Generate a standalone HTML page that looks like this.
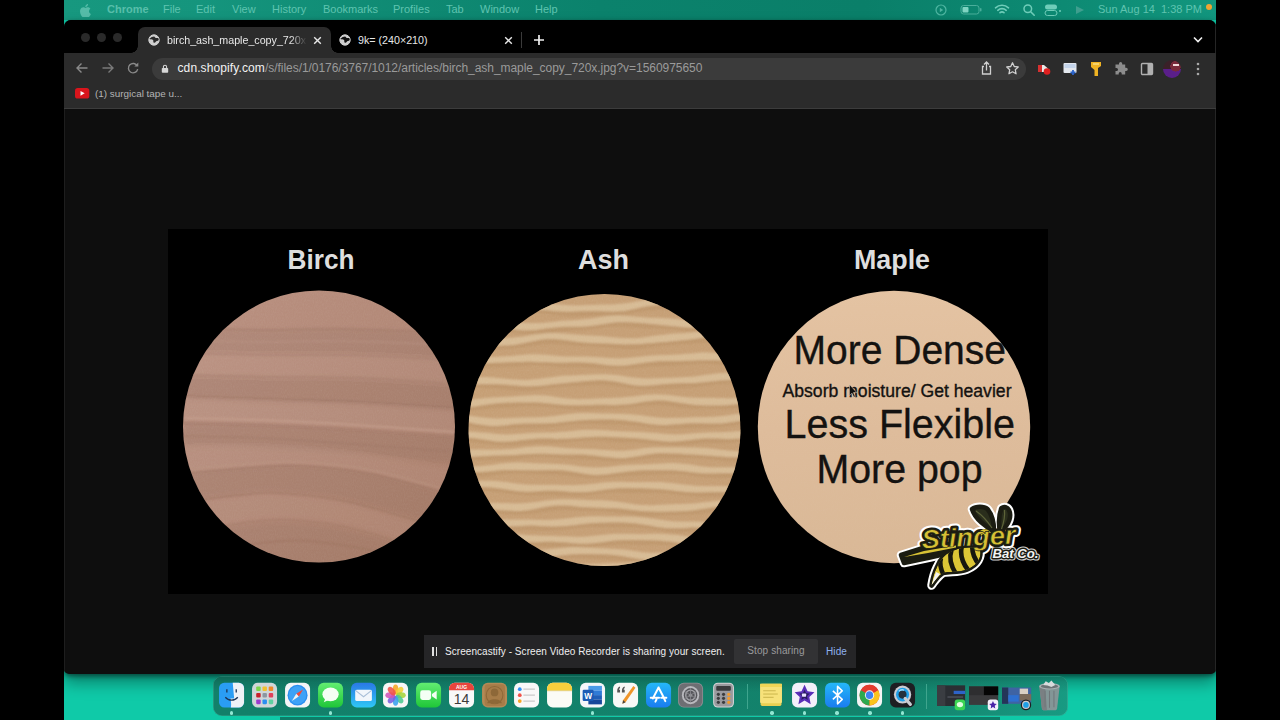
<!DOCTYPE html>
<html><head><meta charset="utf-8">
<style>
html,body{margin:0;padding:0;background:#000;}
body{width:1280px;height:720px;position:relative;overflow:hidden;font-family:"Liberation Sans",sans-serif;}
.abs{position:absolute;}
#desk{left:64px;top:0;width:1152px;height:720px;background:#0fcaa8;overflow:hidden;}
#menubar{left:0;top:0;width:1152px;height:20px;background:linear-gradient(90deg,#17987f 0,#15957d 136px,#0f8a73 340px,#0b826c 536px,#0a7f69 800px,#0d8a73 1000px,#12967e 1152px);}
#menubar span{position:absolute;top:3px;font-size:11px;color:#5fc4b0;white-space:nowrap;line-height:13px;}
#win{left:0;top:20px;width:1152px;height:654px;background:#0e0e0e;border-radius:7px 7px 5px 5px;overflow:hidden;box-shadow:0 2px 5px rgba(0,0,0,.5),0 9px 16px rgba(0,0,0,.36);}
#tabbar{left:0;top:0;width:1152px;height:33px;background:#000;}
#toolbar{left:0;top:33px;width:1152px;height:55px;background:#2b2b2b;border-bottom:1px solid #3c3c3c;}
.tl{width:9px;height:9px;border-radius:50%;background:#2a2a2a;top:13px;}
#tab1{left:74px;top:7px;width:193px;height:27px;background:#2b2b2b;border-radius:7px 7px 0 0;}
.tabtxt{font-size:10.7px;color:#e8e8e8;white-space:nowrap;line-height:13px;}
#url{left:87.500px;top:4.500px;width:874.500px;height:22px;border-radius:12px;background:#3b3b3b;}
#dock{left:148.500px;top:676px;width:855px;height:39.500px;background:linear-gradient(180deg,rgba(0,0,0,.22) 0,rgba(0,0,0,.1) 15%,rgba(0,0,0,0) 40%),linear-gradient(90deg,#12806a 0,#13836c 80%,#189a82 100%);border-radius:9px;box-shadow:inset 0 0 0 .6px rgba(120,220,200,.35);}
.ic{position:absolute;top:6px;width:27px;height:27px;border-radius:6px;}
.dot{position:absolute;top:35.200px;width:3.400px;height:3.400px;border-radius:50%;background:#93e6d3;}
</style></head><body>
<div id="desk" class="abs">
 <div id="menubar" class="abs">
  <svg class="abs" style="left:15px;top:3px" width="12" height="14" viewBox="0 0 12 14"><path d="M8.3 3.1c.5-.6.8-1.400.7-2.200-.7 0-1.500.5-2 1.100-.4.500-.8 1.300-.7 2.100.8.100 1.500-.400 2-1zM9 4.300c-1.100-.100-2 .600-2.500.600s-1.300-.600-2.200-.600c-1.100 0-2.200.700-2.700 1.700-1.200 2-.3 5 .8 6.700.6.800 1.200 1.700 2.100 1.700.8 0 1.200-.500 2.200-.500s1.300.500 2.200.500 1.500-.800 2-1.600c.700-.900.900-1.800.900-1.900 0 0-1.800-.700-1.800-2.700 0-1.700 1.400-2.500 1.400-2.500-.700-1.100-1.900-1.300-2.400-1.400z" fill="#55bca8"/></svg>
  <span style="left:43px;font-weight:bold;color:#58bfab">Chrome</span>
  <span style="left:99px">File</span>
  <span style="left:132px">Edit</span>
  <span style="left:168px">View</span>
  <span style="left:208px">History</span>
  <span style="left:259px">Bookmarks</span>
  <span style="left:329px">Profiles</span>
  <span style="left:382px">Tab</span>
  <span style="left:416px">Window</span>
  <span style="left:471px">Help</span>
  <svg class="abs" style="left:870px;top:3px" width="14" height="14" viewBox="0 0 14 14"><circle cx="7" cy="7" r="5" fill="none" stroke="#4fb6a2" stroke-width="1.200"/><path d="M5.800 4.800v4.400l3.400-2.200z" fill="#4fb6a2"/></svg>
  <svg class="abs" style="left:896px;top:4px" width="24" height="12" viewBox="0 0 24 12"><rect x="1" y="1.500" width="18" height="8.500" rx="2.500" fill="none" stroke="#4aae9b" stroke-width="1"/><rect x="2.500" y="3" width="6" height="5.500" rx="1" fill="#7fd4c2"/><rect x="20" y="4" width="1.500" height="3.500" rx=".7" fill="#4aae9b"/></svg>
  <svg class="abs" style="left:930px;top:3px" width="16" height="13" viewBox="0 0 16 13"><path d="M1.500 4.800a9.500 9.500 0 0 1 13 0M3.800 7.300a6.200 6.200 0 0 1 8.400 0M6 9.700a3 3 0 0 1 4 0" fill="none" stroke="#6fcdb9" stroke-width="1.600" stroke-linecap="round"/></svg>
  <svg class="abs" style="left:958px;top:3px" width="14" height="14" viewBox="0 0 14 14"><circle cx="5.800" cy="5.800" r="3.800" fill="none" stroke="#6fcdb9" stroke-width="1.500"/><path d="M8.700 8.700l3.500 3.500" stroke="#6fcdb9" stroke-width="1.600" stroke-linecap="round"/></svg>
  <svg class="abs" style="left:980px;top:4px" width="18" height="12" viewBox="0 0 18 12"><rect x="1" y="0.500" width="12" height="5" rx="2.500" fill="#6fcdb9"/><rect x="1" y="6.500" width="12" height="5" rx="2.500" fill="none" stroke="#6fcdb9" stroke-width="1"/><circle cx="16" cy="7" r="1" fill="#6fcdb9"/></svg>
  <svg class="abs" style="left:1010px;top:4px" width="12" height="12" viewBox="0 0 12 12"><path d="M2 2l8 4-8 4z" fill="#3f9f8f"/></svg>
  <span style="left:1034px">Sun Aug 14</span>
  <span style="left:1097px">1:38 PM</span>
  <div class="abs" style="left:1141.500px;top:4px;width:6px;height:6px;border-radius:50%;background:#f0a533"></div>
 </div>
 <div id="win" class="abs">
  <div id="tabbar" class="abs">
   <div class="abs tl" style="left:17px"></div><div class="abs tl" style="left:33px"></div><div class="abs tl" style="left:49px"></div>
   <div id="tab1" class="abs"></div>
   <div class="abs" style="left:67px;top:26px;width:7px;height:7px;background:radial-gradient(circle at 0 0,#000 6.500px,#2b2b2b 7px)"></div>
   <div class="abs" style="left:267px;top:26px;width:7px;height:7px;background:radial-gradient(circle at 100% 0,#000 6.500px,#2b2b2b 7px)"></div>
   <svg class="abs" style="left:84px;top:14px" width="12" height="12" viewBox="0 0 12 12"><circle cx="6" cy="6" r="5.200" fill="#cfcfcf" stroke="#cfcfcf" stroke-width="1"/><path d="M1.200 5c1.500.8 2.800 0 3.800 1s-.5 2.300 1 2.800 1.500-1.800 3-1.800 1.800-1.200 1.800-1.200l-.6-1.800h-2.500l-1.500-1.500-2.500.5z" fill="#2b2b2b"/></svg>
   <div class="abs tabtxt" style="left:103px;top:13.500px;width:140px;overflow:hidden;-webkit-mask-image:linear-gradient(90deg,#000 88%,transparent);mask-image:linear-gradient(90deg,#000 88%,transparent)">birch_ash_maple_copy_720x.jpg</div>
   <svg class="abs" style="left:249px;top:16px" width="9" height="9" viewBox="0 0 9 9"><path d="M1.200 1.200l6.600 6.600M7.800 1.200l-6.600 6.600" stroke="#e8e8e8" stroke-width="1.400"/></svg>
   <svg class="abs" style="left:275px;top:14px" width="12" height="12" viewBox="0 0 12 12"><circle cx="6" cy="6" r="5.200" fill="#cfcfcf" stroke="#cfcfcf" stroke-width="1"/><path d="M1.200 5c1.500.8 2.800 0 3.800 1s-.5 2.300 1 2.800 1.500-1.800 3-1.800 1.800-1.200 1.800-1.200l-.6-1.800h-2.500l-1.500-1.500-2.500.5z" fill="#111"/></svg>
   <div class="abs tabtxt" style="left:294px;top:13.500px">9k= (240×210)</div>
   <svg class="abs" style="left:440px;top:16px" width="9" height="9" viewBox="0 0 9 9"><path d="M1.200 1.200l6.600 6.600M7.800 1.200l-6.600 6.600" stroke="#e8e8e8" stroke-width="1.400"/></svg>
   <div class="abs" style="left:457px;top:12px;width:1px;height:16px;background:#3a3a3a"></div>
   <svg class="abs" style="left:469px;top:14px" width="12" height="12" viewBox="0 0 12 12"><path d="M6 1v10M1 6h10" stroke="#f0f0f0" stroke-width="1.700"/></svg>
   <svg class="abs" style="left:1128px;top:16px" width="12" height="8" viewBox="0 0 12 8"><path d="M2 1.500l4 4 4-4" fill="none" stroke="#f0f0f0" stroke-width="1.600"/></svg>
  </div>
  <!--IMG--><svg class="abs" style="left:104px;top:209px" width="880" height="365" viewBox="168 229 880 365"><defs><clipPath id="cb"><circle cx="319" cy="426.500" r="136"/></clipPath><clipPath id="ca"><circle cx="604.500" cy="430" r="136"/></clipPath><clipPath id="cm"><circle cx="894" cy="427" r="136.200"/></clipPath><linearGradient id="gb" x1="0" y1="0" x2="1" y2="1"><stop offset="0" stop-color="#ba9181"/><stop offset=".5" stop-color="#b28876"/><stop offset="1" stop-color="#aa7e69"/></linearGradient><linearGradient id="gm" x1="0" y1="0" x2="0" y2="1"><stop offset="0" stop-color="#e4c3a2"/><stop offset=".5" stop-color="#debc9b"/><stop offset="1" stop-color="#d9b896"/></linearGradient><filter id="blur1" x="-5%" y="-5%" width="110%" height="110%"><feGaussianBlur stdDeviation="1.300"/></filter><filter id="blur3" x="-5%" y="-5%" width="110%" height="110%"><feGaussianBlur stdDeviation="2.500"/></filter><filter id="grain" x="0" y="0" width="100%" height="100%"><feTurbulence type="fractalNoise" baseFrequency="0.900 0.500" numOctaves="2" seed="4" result="n"/><feColorMatrix in="n" type="matrix" values="0 0 0 0 1  0 0 0 0 1  0 0 0 0 1  0.600 0.600 0 0 -0.420"/></filter></defs><rect x="168" y="229" width="880" height="365" fill="#000"/><g clip-path="url(#cb)"><rect x="180" y="288" width="280" height="280" fill="url(#gb)"/><g filter="url(#blur1)" fill="none"><path d="M183.0 328.0C195.8 328.3 233.8 329.8 260.0 330.0C286.2 330.2 307.5 328.5 340.0 329.0C372.5 329.5 435.8 332.3 455.0 333.0" stroke="#9f7665" stroke-width="1.6" opacity="0.55"/><path d="M183.0 340.0C195.8 340.3 233.8 341.8 260.0 342.0C286.2 342.2 307.5 340.5 340.0 341.0C372.5 341.5 435.8 344.3 455.0 345.0" stroke="#c39c8c" stroke-width="1.4" opacity="0.5"/><path d="M183.0 353.0C197.5 353.3 242.2 354.7 270.0 355.0C297.8 355.3 319.2 354.2 350.0 355.0C380.8 355.8 437.5 359.2 455.0 360.0" stroke="#a27867" stroke-width="1.5" opacity="0.5"/><path d="M183.0 375.0C197.5 375.3 240.5 376.5 270.0 377.0C299.5 377.5 329.2 376.8 360.0 378.0C390.8 379.2 439.2 383.0 455.0 384.0" stroke="#a07664" stroke-width="1.6" opacity="0.55"/><path d="M183.0 396.0C197.5 396.5 240.5 398.0 270.0 399.0C299.5 400.0 329.2 400.5 360.0 402.0C390.8 403.5 439.2 407.0 455.0 408.0" stroke="#9e7462" stroke-width="1.6" opacity="0.5"/><path d="M183.0 418.0C195.8 418.3 233.8 419.0 260.0 420.0C286.2 421.0 307.5 422.0 340.0 424.0C372.5 426.0 435.8 430.7 455.0 432.0" stroke="#c9a391" stroke-width="1.5" opacity="0.7"/><path d="M183.0 423.0C195.8 423.3 233.8 424.0 260.0 425.0C286.2 426.0 307.5 427.0 340.0 429.0C372.5 431.0 435.8 435.7 455.0 437.0" stroke="#9c7260" stroke-width="1.8" opacity="0.55"/><path d="M183.0 436.0C195.8 436.3 233.8 436.8 260.0 438.0C286.2 439.2 307.5 440.7 340.0 443.0C372.5 445.3 435.8 450.5 455.0 452.0" stroke="#a17765" stroke-width="1.4" opacity="0.5"/><path d="M183.0 474.0C194.2 473.0 230.5 469.3 250.0 468.0C269.5 466.7 280.0 465.0 300.0 466.0C320.0 467.0 344.2 469.0 370.0 474.0C395.8 479.0 440.8 492.3 455.0 496.0" stroke="#9a705d" stroke-width="1.8" opacity="0.6"/><path d="M183.0 470.0C194.2 469.0 230.5 465.3 250.0 464.0C269.5 462.7 280.0 461.0 300.0 462.0C320.0 463.0 344.2 465.0 370.0 470.0C395.8 475.0 440.8 488.3 455.0 492.0" stroke="#bd9583" stroke-width="1.3" opacity="0.5"/><path d="M183.0 502.0C192.5 500.8 223.8 496.5 240.0 495.0C256.2 493.5 261.7 491.8 280.0 493.0C298.3 494.2 320.8 495.5 350.0 502.0C379.2 508.5 437.5 527.0 455.0 532.0" stroke="#9a705d" stroke-width="1.8" opacity="0.6"/><path d="M200.0 530.0C208.3 528.7 235.0 523.7 250.0 522.0C265.0 520.3 273.3 519.0 290.0 520.0C306.7 521.0 326.7 522.7 350.0 528.0C373.3 533.3 416.7 548.0 430.0 552.0" stroke="#9b715e" stroke-width="1.6" opacity="0.55"/><path d="M220.0 550.0C228.3 548.7 255.0 543.5 270.0 542.0C285.0 540.5 293.3 539.7 310.0 541.0C326.7 542.3 351.7 546.5 370.0 550.0C388.3 553.5 411.7 560.0 420.0 562.0" stroke="#9b715e" stroke-width="1.5" opacity="0.5"/></g><g filter="url(#blur3)"><path d="M183.0 328.0C195.8 328.3 233.8 329.8 260.0 330.0C286.2 330.2 307.5 328.5 340.0 329.0C372.5 329.5 435.8 332.3 455.0 333.0L455.0 360.0C437.5 359.2 380.8 355.8 350.0 355.0C319.2 354.2 297.8 355.3 270.0 355.0C242.2 354.7 197.5 353.3 183.0 353.0Z" fill="#000" opacity="0.042"/><path d="M183.0 353.0C197.5 353.3 242.2 354.7 270.0 355.0C297.8 355.3 319.2 354.2 350.0 355.0C380.8 355.8 437.5 359.2 455.0 360.0L455.0 384.0C439.2 383.0 390.8 379.2 360.0 378.0C329.2 376.8 299.5 377.5 270.0 377.0C240.5 376.5 197.5 375.3 183.0 375.0Z" fill="#fff" opacity="0.036"/><path d="M183.0 375.0C197.5 375.3 240.5 376.5 270.0 377.0C299.5 377.5 329.2 376.8 360.0 378.0C390.8 379.2 439.2 383.0 455.0 384.0L455.0 412.0C439.2 411.0 390.8 407.5 360.0 406.0C329.2 404.5 299.5 404.0 270.0 403.0C240.5 402.0 197.5 400.5 183.0 400.0Z" fill="#000" opacity="0.048"/><path d="M183.0 400.0C197.5 400.5 240.5 402.0 270.0 403.0C299.5 404.0 329.2 404.5 360.0 406.0C390.8 407.5 439.2 411.0 455.0 412.0L455.0 434.0C435.8 432.7 372.5 428.0 340.0 426.0C307.5 424.0 286.2 423.0 260.0 422.0C233.8 421.0 195.8 420.3 183.0 420.0Z" fill="#fff" opacity="0.042"/><path d="M183.0 423.0C195.8 423.3 233.8 424.0 260.0 425.0C286.2 426.0 307.5 427.0 340.0 429.0C372.5 431.0 435.8 435.7 455.0 437.0L455.0 464.0C435.8 462.2 372.5 455.7 340.0 453.0C307.5 450.3 286.2 449.2 260.0 448.0C233.8 446.8 195.8 446.3 183.0 446.0Z" fill="#000" opacity="0.048"/><path d="M183.0 448.0C195.8 447.7 233.8 445.3 260.0 446.0C286.2 446.7 307.5 448.0 340.0 452.0C372.5 456.0 435.8 467.0 455.0 470.0L455.0 494.0C440.8 490.3 395.8 477.0 370.0 472.0C344.2 467.0 320.0 465.0 300.0 464.0C280.0 463.0 269.5 464.7 250.0 466.0C230.5 467.3 194.2 471.0 183.0 472.0Z" fill="#fff" opacity="0.036"/><path d="M183.0 474.0C194.2 473.0 230.5 469.3 250.0 468.0C269.5 466.7 280.0 465.0 300.0 466.0C320.0 467.0 344.2 469.0 370.0 474.0C395.8 479.0 440.8 492.3 455.0 496.0L455.0 530.0C437.5 525.0 379.2 506.5 350.0 500.0C320.8 493.5 298.3 492.2 280.0 491.0C261.7 489.8 256.2 491.5 240.0 493.0C223.8 494.5 192.5 498.8 183.0 500.0Z" fill="#000" opacity="0.048"/><path d="M183.0 504.0C192.5 502.8 223.8 498.5 240.0 497.0C256.2 495.5 261.7 493.8 280.0 495.0C298.3 496.2 320.8 497.5 350.0 504.0C379.2 510.5 437.5 529.0 455.0 534.0L430.0 550.0C416.7 546.0 373.3 531.3 350.0 526.0C326.7 520.7 306.7 519.0 290.0 518.0C273.3 517.0 265.0 518.3 250.0 520.0C235.0 521.7 208.3 526.7 200.0 528.0Z" fill="#fff" opacity="0.030"/><path d="M200.0 532.0C208.3 530.7 235.0 525.7 250.0 524.0C265.0 522.3 273.3 521.0 290.0 522.0C306.7 523.0 326.7 524.7 350.0 530.0C373.3 535.3 416.7 550.0 430.0 554.0L430.0 570.0C408.3 570.0 338.3 570.0 300.0 570.0C261.7 570.0 216.7 570.0 200.0 570.0Z" fill="#000" opacity="0.042"/></g><rect x="180" y="288" width="280" height="280" filter="url(#grain)" opacity=".10"/></g><g clip-path="url(#ca)"><rect x="466" y="292" width="280" height="280" fill="#c69f75"/><g filter="url(#blur1)"><path d="M466.0 305.2C467.7 305.0 472.7 304.1 476.0 303.6C479.3 303.2 482.7 302.8 486.0 302.6C489.3 302.3 492.7 302.3 496.0 302.2C499.3 302.1 502.7 302.2 506.0 302.1C509.3 302.1 512.7 302.0 516.0 301.9C519.3 301.8 522.7 301.6 526.0 301.6C529.3 301.6 532.7 301.6 536.0 301.8C539.3 302.0 542.7 302.4 546.0 302.8C549.3 303.2 552.7 303.7 556.0 304.1C559.3 304.5 562.7 304.9 566.0 305.1C569.3 305.3 572.7 305.4 576.0 305.4C579.3 305.4 582.7 305.2 586.0 305.0C589.3 304.9 592.7 304.8 596.0 304.7C599.3 304.6 602.7 304.6 606.0 304.5C609.3 304.4 612.7 304.4 616.0 304.2C619.3 303.9 622.7 303.6 626.0 303.2C629.3 302.7 632.7 302.1 636.0 301.5C639.3 301.0 642.7 300.4 646.0 300.0C649.3 299.6 652.7 299.3 656.0 299.1C659.3 298.9 662.7 299.0 666.0 299.0C669.3 299.0 672.7 299.1 676.0 299.1C679.3 299.2 682.7 299.2 686.0 299.2C689.3 299.2 692.7 299.1 696.0 299.1C699.3 299.2 702.7 299.3 706.0 299.5C709.3 299.7 712.7 300.1 716.0 300.5C719.3 300.9 722.7 301.5 726.0 301.8C729.3 302.2 732.7 302.5 736.0 302.7C739.3 302.8 744.3 302.7 746.0 302.7L746.0 308.7C744.3 308.7 739.3 308.9 736.0 308.9C732.7 308.9 729.3 308.8 726.0 308.6C722.7 308.4 719.3 308.1 716.0 307.8C712.7 307.6 709.3 307.3 706.0 307.1C702.7 306.9 699.3 306.7 696.0 306.5C692.7 306.4 689.3 306.2 686.0 306.1C682.7 305.9 679.3 305.6 676.0 305.5C672.7 305.3 669.3 305.0 666.0 305.0C662.7 304.9 659.3 305.0 656.0 305.2C652.7 305.5 649.3 306.0 646.0 306.6C642.7 307.2 639.3 308.1 636.0 308.8C632.7 309.5 629.3 310.3 626.0 310.7C622.7 311.2 619.3 311.5 616.0 311.6C612.7 311.8 609.3 311.6 606.0 311.5C602.7 311.4 599.3 311.2 596.0 311.1C592.7 311.0 589.3 311.0 586.0 311.1C582.7 311.1 579.3 311.4 576.0 311.5C572.7 311.6 569.3 311.7 566.0 311.7C562.7 311.7 559.3 311.5 556.0 311.3C552.7 311.1 549.3 310.7 546.0 310.3C542.7 310.0 539.3 309.6 536.0 309.4C532.7 309.1 529.3 308.9 526.0 308.7C522.7 308.6 519.3 308.5 516.0 308.4C512.7 308.3 509.3 308.2 506.0 308.2C502.7 308.2 499.3 308.1 496.0 308.2C492.7 308.4 489.3 308.6 486.0 309.0C482.7 309.4 479.3 310.0 476.0 310.7C472.7 311.3 467.7 312.4 466.0 312.8Z" fill="#dbc09a" opacity=".85"/><path d="M466.0 312.8C467.7 312.4 472.7 311.3 476.0 310.7C479.3 310.0 482.7 309.4 486.0 309.0C489.3 308.6 492.7 308.4 496.0 308.2C499.3 308.1 502.7 308.2 506.0 308.2C509.3 308.2 512.7 308.3 516.0 308.4C519.3 308.5 522.7 308.6 526.0 308.7C529.3 308.9 532.7 309.1 536.0 309.4C539.3 309.6 542.7 310.0 546.0 310.3C549.3 310.7 552.7 311.1 556.0 311.3C559.3 311.5 562.7 311.7 566.0 311.7C569.3 311.7 572.7 311.6 576.0 311.5C579.3 311.4 582.7 311.1 586.0 311.1C589.3 311.0 592.7 311.0 596.0 311.1C599.3 311.2 602.7 311.4 606.0 311.5C609.3 311.6 612.7 311.8 616.0 311.6C619.3 311.5 622.7 311.2 626.0 310.7C629.3 310.3 632.7 309.5 636.0 308.8C639.3 308.1 642.7 307.2 646.0 306.6C649.3 306.0 652.7 305.5 656.0 305.2C659.3 305.0 662.7 304.9 666.0 305.0C669.3 305.0 672.7 305.3 676.0 305.5C679.3 305.6 682.7 305.9 686.0 306.1C689.3 306.2 692.7 306.4 696.0 306.5C699.3 306.7 702.7 306.9 706.0 307.1C709.3 307.3 712.7 307.6 716.0 307.8C719.3 308.1 722.7 308.4 726.0 308.6C729.3 308.8 732.7 308.9 736.0 308.9C739.3 308.9 744.3 308.7 746.0 308.7L746.0 313.5C744.3 313.5 739.3 313.6 736.0 313.5C732.7 313.3 729.3 313.0 726.0 312.6C722.7 312.3 719.3 311.7 716.0 311.3C712.7 310.9 709.3 310.5 706.0 310.3C702.7 310.1 699.3 310.0 696.0 309.9C692.7 309.9 689.3 310.0 686.0 310.0C682.7 310.0 679.3 310.0 676.0 309.9C672.7 309.9 669.3 309.8 666.0 309.8C662.7 309.8 659.3 309.7 656.0 309.9C652.7 310.1 649.3 310.4 646.0 310.8C642.7 311.2 639.3 311.8 636.0 312.3C632.7 312.9 629.3 313.5 626.0 314.0C622.7 314.4 619.3 314.7 616.0 315.0C612.7 315.2 609.3 315.2 606.0 315.3C602.7 315.4 599.3 315.4 596.0 315.5C592.7 315.6 589.3 315.7 586.0 315.8C582.7 316.0 579.3 316.2 576.0 316.2C572.7 316.2 569.3 316.1 566.0 315.9C562.7 315.7 559.3 315.3 556.0 314.9C552.7 314.5 549.3 314.0 546.0 313.6C542.7 313.2 539.3 312.8 536.0 312.6C532.7 312.4 529.3 312.4 526.0 312.4C522.7 312.4 519.3 312.6 516.0 312.7C512.7 312.8 509.3 312.9 506.0 312.9C502.7 313.0 499.3 312.9 496.0 313.0C492.7 313.1 489.3 313.1 486.0 313.4C482.7 313.6 479.3 314.0 476.0 314.4C472.7 314.9 467.7 315.8 466.0 316.0Z" fill="#b58d62" opacity=".45"/><path d="M466.0 318.9C467.7 318.9 472.7 319.2 476.0 319.3C479.3 319.5 482.7 319.5 486.0 319.6C489.3 319.7 492.7 319.8 496.0 320.0C499.3 320.2 502.7 320.5 506.0 320.9C509.3 321.2 512.7 321.7 516.0 322.1C519.3 322.5 522.7 322.9 526.0 323.0C529.3 323.2 532.7 323.2 536.0 323.1C539.3 323.0 542.7 322.7 546.0 322.4C549.3 322.1 552.7 321.7 556.0 321.4C559.3 321.1 562.7 320.8 566.0 320.6C569.3 320.4 572.7 320.2 576.0 320.0C579.3 319.7 582.7 319.5 586.0 319.1C589.3 318.7 592.7 318.2 596.0 317.7C599.3 317.3 602.7 316.7 606.0 316.3C609.3 316.0 612.7 315.7 616.0 315.6C619.3 315.6 622.7 315.7 626.0 315.9C629.3 316.0 632.7 316.4 636.0 316.7C639.3 316.9 642.7 317.2 646.0 317.4C649.3 317.5 652.7 317.6 656.0 317.8C659.3 317.9 662.7 318.0 666.0 318.2C669.3 318.4 672.7 318.7 676.0 319.0C679.3 319.3 682.7 319.8 686.0 320.1C689.3 320.4 692.7 320.7 696.0 320.7C699.3 320.8 702.7 320.7 706.0 320.5C709.3 320.3 712.7 319.9 716.0 319.5C719.3 319.1 722.7 318.6 726.0 318.3C729.3 317.9 732.7 317.6 736.0 317.4C739.3 317.1 744.3 316.8 746.0 316.7L746.0 323.9C744.3 323.9 739.3 323.9 736.0 323.9C732.7 324.0 729.3 324.1 726.0 324.4C722.7 324.6 719.3 325.1 716.0 325.5C712.7 325.9 709.3 326.5 706.0 326.9C702.7 327.3 699.3 327.6 696.0 327.7C692.7 327.8 689.3 327.7 686.0 327.5C682.7 327.3 679.3 326.9 676.0 326.6C672.7 326.2 669.3 325.8 666.0 325.4C662.7 325.1 659.3 324.7 656.0 324.4C652.7 324.1 649.3 323.8 646.0 323.5C642.7 323.2 639.3 322.9 636.0 322.7C632.7 322.4 629.3 322.2 626.0 322.2C622.7 322.2 619.3 322.3 616.0 322.5C612.7 322.8 609.3 323.3 606.0 323.8C602.7 324.2 599.3 324.9 596.0 325.3C592.7 325.8 589.3 326.2 586.0 326.4C582.7 326.7 579.3 326.7 576.0 326.8C572.7 326.8 569.3 326.7 566.0 326.8C562.7 326.9 559.3 327.1 556.0 327.4C552.7 327.7 549.3 328.2 546.0 328.6C542.7 329.0 539.3 329.6 536.0 329.9C532.7 330.2 529.3 330.4 526.0 330.4C522.7 330.3 519.3 330.0 516.0 329.7C512.7 329.3 509.3 328.7 506.0 328.3C502.7 327.8 499.3 327.3 496.0 326.9C492.7 326.5 489.3 326.2 486.0 325.9C482.7 325.7 479.3 325.5 476.0 325.4C472.7 325.2 467.7 325.1 466.0 325.0Z" fill="#dbc09a" opacity=".85"/><path d="M466.0 325.0C467.7 325.1 472.7 325.2 476.0 325.4C479.3 325.5 482.7 325.7 486.0 325.9C489.3 326.2 492.7 326.5 496.0 326.9C499.3 327.3 502.7 327.8 506.0 328.3C509.3 328.7 512.7 329.3 516.0 329.7C519.3 330.0 522.7 330.3 526.0 330.4C529.3 330.4 532.7 330.2 536.0 329.9C539.3 329.6 542.7 329.0 546.0 328.6C549.3 328.2 552.7 327.7 556.0 327.4C559.3 327.1 562.7 326.9 566.0 326.8C569.3 326.7 572.7 326.8 576.0 326.8C579.3 326.7 582.7 326.7 586.0 326.4C589.3 326.2 592.7 325.8 596.0 325.3C599.3 324.9 602.7 324.2 606.0 323.8C609.3 323.3 612.7 322.8 616.0 322.5C619.3 322.3 622.7 322.2 626.0 322.2C629.3 322.2 632.7 322.4 636.0 322.7C639.3 322.9 642.7 323.2 646.0 323.5C649.3 323.8 652.7 324.1 656.0 324.4C659.3 324.7 662.7 325.1 666.0 325.4C669.3 325.8 672.7 326.2 676.0 326.6C679.3 326.9 682.7 327.3 686.0 327.5C689.3 327.7 692.7 327.8 696.0 327.7C699.3 327.6 702.7 327.3 706.0 326.9C709.3 326.5 712.7 325.9 716.0 325.5C719.3 325.1 722.7 324.6 726.0 324.4C729.3 324.1 732.7 324.0 736.0 323.9C739.3 323.9 744.3 323.9 746.0 323.9L746.0 327.5C744.3 327.6 739.3 327.9 736.0 328.2C732.7 328.4 729.3 328.7 726.0 329.1C722.7 329.4 719.3 329.9 716.0 330.3C712.7 330.7 709.3 331.1 706.0 331.3C702.7 331.5 699.3 331.6 696.0 331.5C692.7 331.5 689.3 331.2 686.0 330.9C682.7 330.6 679.3 330.1 676.0 329.8C672.7 329.5 669.3 329.2 666.0 329.0C662.7 328.8 659.3 328.7 656.0 328.6C652.7 328.4 649.3 328.3 646.0 328.2C642.7 328.0 639.3 327.7 636.0 327.5C632.7 327.2 629.3 326.8 626.0 326.7C622.7 326.5 619.3 326.4 616.0 326.4C612.7 326.5 609.3 326.8 606.0 327.1C602.7 327.5 599.3 328.1 596.0 328.5C592.7 329.0 589.3 329.5 586.0 329.9C582.7 330.3 579.3 330.5 576.0 330.8C572.7 331.0 569.3 331.2 566.0 331.4C562.7 331.6 559.3 331.9 556.0 332.2C552.7 332.5 549.3 332.9 546.0 333.2C542.7 333.5 539.3 333.8 536.0 333.9C532.7 334.0 529.3 334.0 526.0 333.8C522.7 333.7 519.3 333.3 516.0 332.9C512.7 332.5 509.3 332.0 506.0 331.7C502.7 331.3 499.3 331.0 496.0 330.8C492.7 330.6 489.3 330.5 486.0 330.4C482.7 330.3 479.3 330.3 476.0 330.1C472.7 330.0 467.7 329.7 466.0 329.7Z" fill="#b58d62" opacity=".45"/><path d="M466.0 340.0C467.7 340.0 472.7 340.0 476.0 339.9C479.3 339.8 482.7 339.4 486.0 339.2C489.3 339.0 492.7 338.8 496.0 338.6C499.3 338.4 502.7 338.2 506.0 338.0C509.3 337.8 512.7 337.6 516.0 337.2C519.3 336.9 522.7 336.4 526.0 335.9C529.3 335.4 532.7 334.8 536.0 334.3C539.3 333.8 542.7 333.4 546.0 333.2C549.3 333.0 552.7 332.9 556.0 333.0C559.3 333.1 562.7 333.5 566.0 333.7C569.3 334.0 572.7 334.4 576.0 334.6C579.3 334.9 582.7 335.1 586.0 335.3C589.3 335.5 592.7 335.6 596.0 335.8C599.3 336.0 602.7 336.2 606.0 336.5C609.3 336.8 612.7 337.2 616.0 337.5C619.3 337.8 622.7 338.2 626.0 338.3C629.3 338.4 632.7 338.4 636.0 338.2C639.3 338.0 642.7 337.6 646.0 337.1C649.3 336.7 652.7 336.1 656.0 335.6C659.3 335.1 662.7 334.7 666.0 334.4C669.3 334.0 672.7 333.8 676.0 333.6C679.3 333.3 682.7 333.2 686.0 332.9C689.3 332.7 692.7 332.4 696.0 332.1C699.3 331.9 702.7 331.5 706.0 331.4C709.3 331.2 712.7 331.1 716.0 331.2C719.3 331.3 722.7 331.7 726.0 332.0C729.3 332.4 732.7 333.0 736.0 333.5C739.3 334.0 744.3 334.6 746.0 334.8L746.0 342.3C744.3 342.0 739.3 341.1 736.0 340.5C732.7 339.9 729.3 339.0 726.0 338.5C722.7 337.9 719.3 337.4 716.0 337.3C712.7 337.1 709.3 337.2 706.0 337.5C702.7 337.7 699.3 338.2 696.0 338.7C692.7 339.1 689.3 339.7 686.0 340.1C682.7 340.5 679.3 340.8 676.0 341.1C672.7 341.4 669.3 341.6 666.0 341.9C662.7 342.1 659.3 342.4 656.0 342.7C652.7 343.0 649.3 343.4 646.0 343.6C642.7 343.9 639.3 344.1 636.0 344.3C632.7 344.4 629.3 344.4 626.0 344.4C622.7 344.3 619.3 344.1 616.0 344.0C612.7 343.9 609.3 343.7 606.0 343.6C602.7 343.5 599.3 343.4 596.0 343.3C592.7 343.2 589.3 343.1 586.0 342.8C582.7 342.6 579.3 342.2 576.0 341.8C572.7 341.4 569.3 340.8 566.0 340.3C562.7 339.9 559.3 339.3 556.0 339.2C552.7 339.0 549.3 338.9 546.0 339.2C542.7 339.4 539.3 340.1 536.0 340.7C532.7 341.3 529.3 342.2 526.0 342.8C522.7 343.5 519.3 344.2 516.0 344.7C512.7 345.1 509.3 345.4 506.0 345.6C502.7 345.8 499.3 345.8 496.0 345.8C492.7 345.9 489.3 345.9 486.0 345.9C482.7 346.0 479.3 346.0 476.0 346.1C472.7 346.1 467.7 346.0 466.0 346.0Z" fill="#dbc09a" opacity=".85"/><path d="M466.0 346.0C467.7 346.0 472.7 346.1 476.0 346.1C479.3 346.0 482.7 346.0 486.0 345.9C489.3 345.9 492.7 345.9 496.0 345.8C499.3 345.8 502.7 345.8 506.0 345.6C509.3 345.4 512.7 345.1 516.0 344.7C519.3 344.2 522.7 343.5 526.0 342.8C529.3 342.2 532.7 341.3 536.0 340.7C539.3 340.1 542.7 339.4 546.0 339.2C549.3 338.9 552.7 339.0 556.0 339.2C559.3 339.3 562.7 339.9 566.0 340.3C569.3 340.8 572.7 341.4 576.0 341.8C579.3 342.2 582.7 342.6 586.0 342.8C589.3 343.1 592.7 343.2 596.0 343.3C599.3 343.4 602.7 343.5 606.0 343.6C609.3 343.7 612.7 343.9 616.0 344.0C619.3 344.1 622.7 344.3 626.0 344.4C629.3 344.4 632.7 344.4 636.0 344.3C639.3 344.1 642.7 343.9 646.0 343.6C649.3 343.4 652.7 343.0 656.0 342.7C659.3 342.4 662.7 342.1 666.0 341.9C669.3 341.6 672.7 341.4 676.0 341.1C679.3 340.8 682.7 340.5 686.0 340.1C689.3 339.7 692.7 339.1 696.0 338.7C699.3 338.2 702.7 337.7 706.0 337.5C709.3 337.2 712.7 337.1 716.0 337.3C719.3 337.4 722.7 337.9 726.0 338.5C729.3 339.0 732.7 339.9 736.0 340.5C739.3 341.1 744.3 342.0 746.0 342.3L746.0 345.6C744.3 345.4 739.3 344.8 736.0 344.3C732.7 343.8 729.3 343.2 726.0 342.8C722.7 342.5 719.3 342.1 716.0 342.0C712.7 341.9 709.3 342.0 706.0 342.2C702.7 342.3 699.3 342.7 696.0 342.9C692.7 343.2 689.3 343.5 686.0 343.7C682.7 344.0 679.3 344.1 676.0 344.4C672.7 344.6 669.3 344.8 666.0 345.2C662.7 345.5 659.3 345.9 656.0 346.4C652.7 346.9 649.3 347.5 646.0 347.9C642.7 348.4 639.3 348.8 636.0 349.0C632.7 349.2 629.3 349.2 626.0 349.1C622.7 349.0 619.3 348.6 616.0 348.3C612.7 348.0 609.3 347.6 606.0 347.3C602.7 347.0 599.3 346.8 596.0 346.6C592.7 346.4 589.3 346.3 586.0 346.1C582.7 345.9 579.3 345.7 576.0 345.4C572.7 345.2 569.3 344.8 566.0 344.5C562.7 344.3 559.3 343.9 556.0 343.8C552.7 343.7 549.3 343.8 546.0 344.0C542.7 344.2 539.3 344.6 536.0 345.1C532.7 345.6 529.3 346.2 526.0 346.7C522.7 347.2 519.3 347.7 516.0 348.0C512.7 348.4 509.3 348.6 506.0 348.8C502.7 349.0 499.3 349.2 496.0 349.4C492.7 349.6 489.3 349.8 486.0 350.0C482.7 350.2 479.3 350.6 476.0 350.7C472.7 350.8 467.7 350.8 466.0 350.8Z" fill="#b58d62" opacity=".45"/><path d="M466.0 358.6C467.7 358.4 472.7 357.8 476.0 357.6C479.3 357.3 482.7 357.1 486.0 357.0C489.3 356.8 492.7 356.8 496.0 356.7C499.3 356.6 502.7 356.5 506.0 356.3C509.3 356.1 512.7 355.7 516.0 355.5C519.3 355.2 522.7 354.8 526.0 354.6C529.3 354.4 532.7 354.3 536.0 354.3C539.3 354.4 542.7 354.6 546.0 354.8C549.3 355.1 552.7 355.5 556.0 355.7C559.3 356.0 562.7 356.2 566.0 356.4C569.3 356.5 572.7 356.5 576.0 356.5C579.3 356.6 582.7 356.6 586.0 356.6C589.3 356.7 592.7 356.9 596.0 357.1C599.3 357.3 602.7 357.6 606.0 357.8C609.3 358.0 612.7 358.2 616.0 358.3C619.3 358.3 622.7 358.1 626.0 357.9C629.3 357.7 632.7 357.3 636.0 356.9C639.3 356.6 642.7 356.2 646.0 355.9C649.3 355.7 652.7 355.5 656.0 355.3C659.3 355.2 662.7 355.2 666.0 355.1C669.3 355.0 672.7 354.8 676.0 354.6C679.3 354.4 682.7 354.1 686.0 353.8C689.3 353.5 692.7 353.1 696.0 352.9C699.3 352.7 702.7 352.6 706.0 352.6C709.3 352.6 712.7 352.9 716.0 353.1C719.3 353.3 722.7 353.7 726.0 354.0C729.3 354.2 732.7 354.5 736.0 354.6C739.3 354.7 744.3 354.7 746.0 354.8L746.0 360.8C744.3 360.8 739.3 360.8 736.0 360.7C732.7 360.7 729.3 360.7 726.0 360.6C722.7 360.5 719.3 360.4 716.0 360.3C712.7 360.3 709.3 360.2 706.0 360.2C702.7 360.2 699.3 360.3 696.0 360.4C692.7 360.5 689.3 360.7 686.0 360.8C682.7 360.9 679.3 361.0 676.0 361.1C672.7 361.1 669.3 361.1 666.0 361.1C662.7 361.2 659.3 361.2 656.0 361.4C652.7 361.6 649.3 362.0 646.0 362.4C642.7 362.9 639.3 363.6 636.0 364.1C632.7 364.6 629.3 365.2 626.0 365.5C622.7 365.8 619.3 365.9 616.0 365.8C612.7 365.7 609.3 365.3 606.0 364.9C602.7 364.6 599.3 364.0 596.0 363.6C592.7 363.2 589.3 362.9 586.0 362.7C582.7 362.6 579.3 362.6 576.0 362.6C572.7 362.6 569.3 362.8 566.0 362.8C562.7 362.8 559.3 362.8 556.0 362.8C552.7 362.7 549.3 362.5 546.0 362.3C542.7 362.2 539.3 362.0 536.0 361.9C532.7 361.8 529.3 361.8 526.0 361.8C522.7 361.9 519.3 362.0 516.0 362.1C512.7 362.2 509.3 362.3 506.0 362.4C502.7 362.5 499.3 362.6 496.0 362.7C492.7 362.9 489.3 363.0 486.0 363.3C482.7 363.6 479.3 364.0 476.0 364.5C472.7 365.0 467.7 365.8 466.0 366.1Z" fill="#dbc09a" opacity=".85"/><path d="M466.0 366.1C467.7 365.8 472.7 365.0 476.0 364.5C479.3 364.0 482.7 363.6 486.0 363.3C489.3 363.0 492.7 362.9 496.0 362.7C499.3 362.6 502.7 362.5 506.0 362.4C509.3 362.3 512.7 362.2 516.0 362.1C519.3 362.0 522.7 361.9 526.0 361.8C529.3 361.8 532.7 361.8 536.0 361.9C539.3 362.0 542.7 362.2 546.0 362.3C549.3 362.5 552.7 362.7 556.0 362.8C559.3 362.8 562.7 362.8 566.0 362.8C569.3 362.8 572.7 362.6 576.0 362.6C579.3 362.6 582.7 362.6 586.0 362.7C589.3 362.9 592.7 363.2 596.0 363.6C599.3 364.0 602.7 364.6 606.0 364.9C609.3 365.3 612.7 365.7 616.0 365.8C619.3 365.9 622.7 365.8 626.0 365.5C629.3 365.2 632.7 364.6 636.0 364.1C639.3 363.6 642.7 362.9 646.0 362.4C649.3 362.0 652.7 361.6 656.0 361.4C659.3 361.2 662.7 361.2 666.0 361.1C669.3 361.1 672.7 361.1 676.0 361.1C679.3 361.0 682.7 360.9 686.0 360.8C689.3 360.7 692.7 360.5 696.0 360.4C699.3 360.3 702.7 360.2 706.0 360.2C709.3 360.2 712.7 360.3 716.0 360.3C719.3 360.4 722.7 360.5 726.0 360.6C729.3 360.7 732.7 360.7 736.0 360.7C739.3 360.8 744.3 360.8 746.0 360.8L746.0 365.6C744.3 365.5 739.3 365.5 736.0 365.4C732.7 365.3 729.3 365.0 726.0 364.8C722.7 364.5 719.3 364.1 716.0 363.9C712.7 363.7 709.3 363.4 706.0 363.4C702.7 363.4 699.3 363.5 696.0 363.7C692.7 363.9 689.3 364.3 686.0 364.6C682.7 364.9 679.3 365.2 676.0 365.4C672.7 365.6 669.3 365.8 666.0 365.9C662.7 366.0 659.3 366.0 656.0 366.1C652.7 366.3 649.3 366.5 646.0 366.7C642.7 367.0 639.3 367.4 636.0 367.7C632.7 368.1 629.3 368.5 626.0 368.7C622.7 368.9 619.3 369.1 616.0 369.1C612.7 369.0 609.3 368.8 606.0 368.6C602.7 368.4 599.3 368.1 596.0 367.9C592.7 367.7 589.3 367.5 586.0 367.4C582.7 367.4 579.3 367.4 576.0 367.3C572.7 367.3 569.3 367.3 566.0 367.2C562.7 367.0 559.3 366.8 556.0 366.5C552.7 366.3 549.3 365.9 546.0 365.6C542.7 365.4 539.3 365.2 536.0 365.1C532.7 365.1 529.3 365.2 526.0 365.4C522.7 365.6 519.3 366.0 516.0 366.3C512.7 366.5 509.3 366.9 506.0 367.1C502.7 367.3 499.3 367.4 496.0 367.5C492.7 367.6 489.3 367.6 486.0 367.8C482.7 367.9 479.3 368.1 476.0 368.4C472.7 368.6 467.7 369.2 466.0 369.4Z" fill="#b58d62" opacity=".45"/><path d="M466.0 376.0C467.7 376.1 472.7 376.5 476.0 376.7C479.3 376.9 482.7 377.0 486.0 377.1C489.3 377.3 492.7 377.5 496.0 377.7C499.3 378.0 502.7 378.3 506.0 378.7C509.3 379.0 512.7 379.4 516.0 379.6C519.3 379.8 522.7 380.0 526.0 379.9C529.3 379.8 532.7 379.5 536.0 379.1C539.3 378.8 542.7 378.2 546.0 377.7C549.3 377.3 552.7 376.8 556.0 376.4C559.3 376.1 562.7 375.8 566.0 375.6C569.3 375.4 572.7 375.4 576.0 375.2C579.3 375.1 582.7 375.0 586.0 374.8C589.3 374.7 592.7 374.4 596.0 374.3C599.3 374.3 602.7 374.1 606.0 374.3C609.3 374.4 612.7 374.6 616.0 375.0C619.3 375.3 622.7 375.9 626.0 376.4C629.3 376.9 632.7 377.5 636.0 377.8C639.3 378.1 642.7 378.4 646.0 378.4C649.3 378.5 652.7 378.4 656.0 378.3C659.3 378.2 662.7 378.0 666.0 377.8C669.3 377.7 672.7 377.5 676.0 377.4C679.3 377.3 682.7 377.2 686.0 377.0C689.3 376.8 692.7 376.5 696.0 376.2C699.3 375.8 702.7 375.3 706.0 374.8C709.3 374.4 712.7 373.8 716.0 373.4C719.3 373.1 722.7 372.8 726.0 372.8C729.3 372.7 732.7 372.9 736.0 373.1C739.3 373.4 744.3 374.0 746.0 374.1L746.0 380.4C744.3 380.4 739.3 380.1 736.0 380.0C732.7 380.0 729.3 380.0 726.0 380.2C722.7 380.4 719.3 380.7 716.0 381.0C712.7 381.3 709.3 381.8 706.0 382.1C702.7 382.4 699.3 382.7 696.0 382.9C692.7 383.1 689.3 383.1 686.0 383.2C682.7 383.3 679.3 383.3 676.0 383.4C672.7 383.5 669.3 383.8 666.0 384.0C662.7 384.3 659.3 384.8 656.0 385.1C652.7 385.4 649.3 385.8 646.0 385.8C642.7 385.9 639.3 385.7 636.0 385.4C632.7 385.1 629.3 384.4 626.0 383.8C622.7 383.2 619.3 382.4 616.0 381.8C612.7 381.3 609.3 380.8 606.0 380.5C602.7 380.3 599.3 380.3 596.0 380.4C592.7 380.4 589.3 380.7 586.0 381.0C582.7 381.3 579.3 381.6 576.0 381.9C572.7 382.3 569.3 382.6 566.0 382.9C562.7 383.3 559.3 383.6 556.0 384.0C552.7 384.4 549.3 384.8 546.0 385.2C542.7 385.5 539.3 385.9 536.0 386.1C532.7 386.3 529.3 386.3 526.0 386.3C522.7 386.2 519.3 385.9 516.0 385.6C512.7 385.4 509.3 385.0 506.0 384.8C502.7 384.5 499.3 384.4 496.0 384.3C492.7 384.2 489.3 384.3 486.0 384.3C482.7 384.3 479.3 384.4 476.0 384.2C472.7 384.1 467.7 383.7 466.0 383.6Z" fill="#dbc09a" opacity=".85"/><path d="M466.0 383.6C467.7 383.7 472.7 384.1 476.0 384.2C479.3 384.4 482.7 384.3 486.0 384.3C489.3 384.3 492.7 384.2 496.0 384.3C499.3 384.4 502.7 384.5 506.0 384.8C509.3 385.0 512.7 385.4 516.0 385.6C519.3 385.9 522.7 386.2 526.0 386.3C529.3 386.3 532.7 386.3 536.0 386.1C539.3 385.9 542.7 385.5 546.0 385.2C549.3 384.8 552.7 384.4 556.0 384.0C559.3 383.6 562.7 383.3 566.0 382.9C569.3 382.6 572.7 382.3 576.0 381.9C579.3 381.6 582.7 381.3 586.0 381.0C589.3 380.7 592.7 380.4 596.0 380.4C599.3 380.3 602.7 380.3 606.0 380.5C609.3 380.8 612.7 381.3 616.0 381.8C619.3 382.4 622.7 383.2 626.0 383.8C629.3 384.4 632.7 385.1 636.0 385.4C639.3 385.7 642.7 385.9 646.0 385.8C649.3 385.8 652.7 385.4 656.0 385.1C659.3 384.8 662.7 384.3 666.0 384.0C669.3 383.8 672.7 383.5 676.0 383.4C679.3 383.3 682.7 383.3 686.0 383.2C689.3 383.1 692.7 383.1 696.0 382.9C699.3 382.7 702.7 382.4 706.0 382.1C709.3 381.8 712.7 381.3 716.0 381.0C719.3 380.7 722.7 380.4 726.0 380.2C729.3 380.0 732.7 380.0 736.0 380.0C739.3 380.1 744.3 380.4 746.0 380.4L746.0 384.9C744.3 384.8 739.3 384.2 736.0 383.9C732.7 383.7 729.3 383.5 726.0 383.6C722.7 383.6 719.3 383.9 716.0 384.2C712.7 384.6 709.3 385.2 706.0 385.6C702.7 386.1 699.3 386.6 696.0 387.0C692.7 387.3 689.3 387.6 686.0 387.8C682.7 388.0 679.3 388.1 676.0 388.2C672.7 388.3 669.3 388.5 666.0 388.6C662.7 388.8 659.3 389.0 656.0 389.1C652.7 389.2 649.3 389.3 646.0 389.2C642.7 389.2 639.3 388.9 636.0 388.6C632.7 388.3 629.3 387.7 626.0 387.2C622.7 386.7 619.3 386.1 616.0 385.8C612.7 385.4 609.3 385.2 606.0 385.1C602.7 384.9 599.3 385.1 596.0 385.1C592.7 385.2 589.3 385.5 586.0 385.6C582.7 385.8 579.3 385.9 576.0 386.0C572.7 386.2 569.3 386.2 566.0 386.4C562.7 386.6 559.3 386.9 556.0 387.2C552.7 387.6 549.3 388.1 546.0 388.5C542.7 389.0 539.3 389.6 536.0 389.9C532.7 390.3 529.3 390.6 526.0 390.7C522.7 390.8 519.3 390.6 516.0 390.4C512.7 390.2 509.3 389.8 506.0 389.5C502.7 389.1 499.3 388.8 496.0 388.5C492.7 388.3 489.3 388.1 486.0 387.9C482.7 387.8 479.3 387.7 476.0 387.5C472.7 387.3 467.7 386.9 466.0 386.8Z" fill="#b58d62" opacity=".45"/><path d="M466.0 400.0C467.7 399.9 472.7 399.5 476.0 399.1C479.3 398.8 482.7 398.4 486.0 398.1C489.3 397.7 492.7 397.5 496.0 397.3C499.3 397.1 502.7 397.0 506.0 396.8C509.3 396.6 512.7 396.5 516.0 396.2C519.3 396.0 522.7 395.7 526.0 395.5C529.3 395.4 532.7 395.1 536.0 395.1C539.3 395.2 542.7 395.3 546.0 395.6C549.3 395.9 552.7 396.4 556.0 396.9C559.3 397.3 562.7 397.9 566.0 398.3C569.3 398.6 572.7 398.9 576.0 399.1C579.3 399.2 582.7 399.1 586.0 399.0C589.3 398.9 592.7 398.7 596.0 398.5C599.3 398.4 602.7 398.2 606.0 398.1C609.3 397.9 612.7 397.9 616.0 397.7C619.3 397.5 622.7 397.3 626.0 397.0C629.3 396.7 632.7 396.3 636.0 395.9C639.3 395.5 642.7 395.0 646.0 394.7C649.3 394.4 652.7 394.2 656.0 394.2C659.3 394.2 662.7 394.5 666.0 394.8C669.3 395.1 672.7 395.6 676.0 396.0C679.3 396.4 682.7 396.9 686.0 397.1C689.3 397.4 692.7 397.6 696.0 397.7C699.3 397.8 702.7 397.8 706.0 397.8C709.3 397.9 712.7 397.9 716.0 398.0C719.3 398.0 722.7 398.2 726.0 398.2C729.3 398.2 732.7 398.2 736.0 398.0C739.3 397.8 744.3 397.1 746.0 397.0L746.0 403.0C744.3 403.2 739.3 404.0 736.0 404.3C732.7 404.7 729.3 405.0 726.0 405.2C722.7 405.3 719.3 405.4 716.0 405.5C712.7 405.5 709.3 405.5 706.0 405.4C702.7 405.3 699.3 405.2 696.0 404.9C692.7 404.7 689.3 404.3 686.0 403.8C682.7 403.3 679.3 402.7 676.0 402.2C672.7 401.7 669.3 401.1 666.0 400.8C662.7 400.5 659.3 400.4 656.0 400.5C652.7 400.7 649.3 401.1 646.0 401.6C642.7 402.1 639.3 402.8 636.0 403.3C632.7 403.8 629.3 404.3 626.0 404.6C622.7 404.9 619.3 405.0 616.0 405.0C612.7 405.1 609.3 404.9 606.0 404.8C602.7 404.8 599.3 404.7 596.0 404.7C592.7 404.8 589.3 404.9 586.0 405.0C582.7 405.1 579.3 405.3 576.0 405.3C572.7 405.3 569.3 405.2 566.0 405.1C562.7 404.9 559.3 404.5 556.0 404.2C552.7 403.9 549.3 403.5 546.0 403.2C542.7 402.9 539.3 402.7 536.0 402.5C532.7 402.4 529.3 402.4 526.0 402.4C522.7 402.4 519.3 402.5 516.0 402.5C512.7 402.6 509.3 402.7 506.0 402.8C502.7 403.0 499.3 403.1 496.0 403.5C492.7 403.8 489.3 404.2 486.0 404.7C482.7 405.2 479.3 405.9 476.0 406.4C472.7 406.9 467.7 407.4 466.0 407.6Z" fill="#dbc09a" opacity=".85"/><path d="M466.0 407.6C467.7 407.4 472.7 406.9 476.0 406.4C479.3 405.9 482.7 405.2 486.0 404.7C489.3 404.2 492.7 403.8 496.0 403.5C499.3 403.1 502.7 403.0 506.0 402.8C509.3 402.7 512.7 402.6 516.0 402.5C519.3 402.5 522.7 402.4 526.0 402.4C529.3 402.4 532.7 402.4 536.0 402.5C539.3 402.7 542.7 402.9 546.0 403.2C549.3 403.5 552.7 403.9 556.0 404.2C559.3 404.5 562.7 404.9 566.0 405.1C569.3 405.2 572.7 405.3 576.0 405.3C579.3 405.3 582.7 405.1 586.0 405.0C589.3 404.9 592.7 404.8 596.0 404.7C599.3 404.7 602.7 404.8 606.0 404.8C609.3 404.9 612.7 405.1 616.0 405.0C619.3 405.0 622.7 404.9 626.0 404.6C629.3 404.3 632.7 403.8 636.0 403.3C639.3 402.8 642.7 402.1 646.0 401.6C649.3 401.1 652.7 400.7 656.0 400.5C659.3 400.4 662.7 400.5 666.0 400.8C669.3 401.1 672.7 401.7 676.0 402.2C679.3 402.7 682.7 403.3 686.0 403.8C689.3 404.3 692.7 404.7 696.0 404.9C699.3 405.2 702.7 405.3 706.0 405.4C709.3 405.5 712.7 405.5 716.0 405.5C719.3 405.4 722.7 405.3 726.0 405.2C729.3 405.0 732.7 404.7 736.0 404.3C739.3 404.0 744.3 403.2 746.0 403.0L746.0 407.8C744.3 407.9 739.3 408.6 736.0 408.8C732.7 409.0 729.3 409.0 726.0 409.0C722.7 409.0 719.3 408.8 716.0 408.8C712.7 408.7 709.3 408.7 706.0 408.6C702.7 408.6 699.3 408.6 696.0 408.5C692.7 408.4 689.3 408.2 686.0 407.9C682.7 407.7 679.3 407.2 676.0 406.8C672.7 406.4 669.3 405.9 666.0 405.6C662.7 405.3 659.3 405.0 656.0 405.0C652.7 405.0 649.3 405.2 646.0 405.5C642.7 405.8 639.3 406.3 636.0 406.7C632.7 407.1 629.3 407.5 626.0 407.8C622.7 408.1 619.3 408.3 616.0 408.5C612.7 408.7 609.3 408.7 606.0 408.9C602.7 409.0 599.3 409.2 596.0 409.3C592.7 409.5 589.3 409.7 586.0 409.8C582.7 409.9 579.3 410.0 576.0 409.9C572.7 409.7 569.3 409.4 566.0 409.1C562.7 408.7 559.3 408.1 556.0 407.7C552.7 407.2 549.3 406.7 546.0 406.4C542.7 406.1 539.3 406.0 536.0 405.9C532.7 405.9 529.3 406.2 526.0 406.3C522.7 406.5 519.3 406.8 516.0 407.0C512.7 407.3 509.3 407.4 506.0 407.6C502.7 407.8 499.3 407.9 496.0 408.1C492.7 408.3 489.3 408.5 486.0 408.9C482.7 409.2 479.3 409.6 476.0 409.9C472.7 410.3 467.7 410.7 466.0 410.8Z" fill="#b58d62" opacity=".45"/><path d="M466.0 415.3C467.7 415.5 472.7 416.1 476.0 416.6C479.3 417.0 482.7 417.5 486.0 417.8C489.3 418.1 492.7 418.4 496.0 418.4C499.3 418.5 502.7 418.4 506.0 418.3C509.3 418.1 512.7 417.9 516.0 417.8C519.3 417.6 522.7 417.5 526.0 417.5C529.3 417.4 532.7 417.4 536.0 417.3C539.3 417.2 542.7 417.1 546.0 416.8C549.3 416.5 552.7 416.1 556.0 415.7C559.3 415.2 562.7 414.6 566.0 414.2C569.3 413.8 572.7 413.4 576.0 413.2C579.3 412.9 582.7 412.9 586.0 412.9C589.3 412.9 592.7 413.1 596.0 413.2C599.3 413.4 602.7 413.5 606.0 413.6C609.3 413.7 612.7 413.7 616.0 413.7C619.3 413.8 622.7 413.8 626.0 413.9C629.3 414.1 632.7 414.3 636.0 414.7C639.3 415.0 642.7 415.6 646.0 416.0C649.3 416.4 652.7 417.0 656.0 417.3C659.3 417.6 662.7 417.8 666.0 417.9C669.3 418.0 672.7 417.9 676.0 417.8C679.3 417.7 682.7 417.5 686.0 417.4C689.3 417.3 692.7 417.2 696.0 417.1C699.3 417.1 702.7 417.1 706.0 417.0C709.3 416.9 712.7 416.8 716.0 416.5C719.3 416.3 722.7 415.8 726.0 415.4C729.3 414.9 732.7 414.3 736.0 413.9C739.3 413.5 744.3 413.0 746.0 412.8L746.0 420.1C744.3 420.3 739.3 421.0 736.0 421.5C732.7 422.0 729.3 422.5 726.0 422.9C722.7 423.2 719.3 423.5 716.0 423.5C712.7 423.6 709.3 423.5 706.0 423.4C702.7 423.4 699.3 423.2 696.0 423.2C692.7 423.2 689.3 423.3 686.0 423.4C682.7 423.6 679.3 424.0 676.0 424.3C672.7 424.6 669.3 425.0 666.0 425.0C662.7 425.1 659.3 425.1 656.0 424.8C652.7 424.6 649.3 424.0 646.0 423.5C642.7 423.0 639.3 422.3 636.0 421.8C632.7 421.3 629.3 420.8 626.0 420.4C622.7 420.1 619.3 419.9 616.0 419.8C612.7 419.7 609.3 419.7 606.0 419.6C602.7 419.6 599.3 419.6 596.0 419.7C592.7 419.7 589.3 419.8 586.0 419.9C582.7 420.1 579.3 420.4 576.0 420.7C572.7 421.0 569.3 421.4 566.0 421.8C562.7 422.2 559.3 422.6 556.0 422.9C552.7 423.1 549.3 423.3 546.0 423.4C542.7 423.5 539.3 423.4 536.0 423.4C532.7 423.4 529.3 423.4 526.0 423.5C522.7 423.6 519.3 423.8 516.0 424.1C512.7 424.4 509.3 424.9 506.0 425.2C502.7 425.5 499.3 425.8 496.0 425.9C492.7 425.9 489.3 425.8 486.0 425.4C482.7 425.1 479.3 424.4 476.0 423.9C472.7 423.3 467.7 422.3 466.0 422.0Z" fill="#dbc09a" opacity=".85"/><path d="M466.0 422.0C467.7 422.3 472.7 423.3 476.0 423.9C479.3 424.4 482.7 425.1 486.0 425.4C489.3 425.8 492.7 425.9 496.0 425.9C499.3 425.8 502.7 425.5 506.0 425.2C509.3 424.9 512.7 424.4 516.0 424.1C519.3 423.8 522.7 423.6 526.0 423.5C529.3 423.4 532.7 423.4 536.0 423.4C539.3 423.4 542.7 423.5 546.0 423.4C549.3 423.3 552.7 423.1 556.0 422.9C559.3 422.6 562.7 422.2 566.0 421.8C569.3 421.4 572.7 421.0 576.0 420.7C579.3 420.4 582.7 420.1 586.0 419.9C589.3 419.8 592.7 419.7 596.0 419.7C599.3 419.6 602.7 419.6 606.0 419.6C609.3 419.7 612.7 419.7 616.0 419.8C619.3 419.9 622.7 420.1 626.0 420.4C629.3 420.8 632.7 421.3 636.0 421.8C639.3 422.3 642.7 423.0 646.0 423.5C649.3 424.0 652.7 424.6 656.0 424.8C659.3 425.1 662.7 425.1 666.0 425.0C669.3 425.0 672.7 424.6 676.0 424.3C679.3 424.0 682.7 423.6 686.0 423.4C689.3 423.3 692.7 423.2 696.0 423.2C699.3 423.2 702.7 423.4 706.0 423.4C709.3 423.5 712.7 423.6 716.0 423.5C719.3 423.5 722.7 423.2 726.0 422.9C729.3 422.5 732.7 422.0 736.0 421.5C739.3 421.0 744.3 420.3 746.0 420.1L746.0 423.6C744.3 423.8 739.3 424.3 736.0 424.7C732.7 425.1 729.3 425.7 726.0 426.2C722.7 426.6 719.3 427.1 716.0 427.3C712.7 427.6 709.3 427.7 706.0 427.8C702.7 427.9 699.3 427.9 696.0 427.9C692.7 428.0 689.3 428.1 686.0 428.2C682.7 428.3 679.3 428.5 676.0 428.6C672.7 428.7 669.3 428.8 666.0 428.7C662.7 428.6 659.3 428.4 656.0 428.1C652.7 427.8 649.3 427.2 646.0 426.8C642.7 426.4 639.3 425.8 636.0 425.5C632.7 425.1 629.3 424.9 626.0 424.7C622.7 424.6 619.3 424.6 616.0 424.5C612.7 424.5 609.3 424.5 606.0 424.4C602.7 424.3 599.3 424.2 596.0 424.0C592.7 423.9 589.3 423.7 586.0 423.7C582.7 423.7 579.3 423.7 576.0 424.0C572.7 424.2 569.3 424.6 566.0 425.0C562.7 425.4 559.3 426.0 556.0 426.5C552.7 426.9 549.3 427.3 546.0 427.6C542.7 427.9 539.3 428.0 536.0 428.1C532.7 428.2 529.3 428.2 526.0 428.3C522.7 428.3 519.3 428.4 516.0 428.6C512.7 428.7 509.3 428.9 506.0 429.1C502.7 429.2 499.3 429.3 496.0 429.2C492.7 429.2 489.3 428.9 486.0 428.6C482.7 428.3 479.3 427.8 476.0 427.4C472.7 426.9 467.7 426.3 466.0 426.1Z" fill="#b58d62" opacity=".45"/><path d="M466.0 431.5C467.7 431.5 472.7 431.7 476.0 431.9C479.3 432.1 482.7 432.5 486.0 432.8C489.3 433.1 492.7 433.6 496.0 433.9C499.3 434.1 502.7 434.3 506.0 434.4C509.3 434.4 512.7 434.3 516.0 434.1C519.3 433.9 522.7 433.6 526.0 433.3C529.3 433.1 532.7 432.9 536.0 432.7C539.3 432.6 542.7 432.6 546.0 432.5C549.3 432.4 552.7 432.4 556.0 432.2C559.3 432.1 562.7 431.8 566.0 431.6C569.3 431.3 572.7 430.8 576.0 430.5C579.3 430.2 582.7 429.9 586.0 429.7C589.3 429.6 592.7 429.6 596.0 429.7C599.3 429.8 602.7 430.1 606.0 430.3C609.3 430.6 612.7 430.9 616.0 431.1C619.3 431.3 622.7 431.5 626.0 431.6C629.3 431.7 632.7 431.7 636.0 431.8C639.3 431.9 642.7 432.0 646.0 432.2C649.3 432.4 652.7 432.8 656.0 433.1C659.3 433.4 662.7 433.8 666.0 434.0C669.3 434.3 672.7 434.4 676.0 434.4C679.3 434.4 682.7 434.2 686.0 434.0C689.3 433.8 692.7 433.4 696.0 433.1C699.3 432.9 702.7 432.6 706.0 432.5C709.3 432.3 712.7 432.3 716.0 432.2C719.3 432.1 722.7 432.1 726.0 431.9C729.3 431.8 732.7 431.6 736.0 431.3C739.3 431.0 744.3 430.5 746.0 430.3L746.0 437.9C744.3 438.0 739.3 438.6 736.0 438.8C732.7 439.0 729.3 439.0 726.0 439.0C722.7 438.9 719.3 438.7 716.0 438.6C712.7 438.5 709.3 438.4 706.0 438.5C702.7 438.6 699.3 438.9 696.0 439.2C692.7 439.6 689.3 440.1 686.0 440.5C682.7 440.9 679.3 441.4 676.0 441.5C672.7 441.7 669.3 441.7 666.0 441.6C662.7 441.4 659.3 441.0 656.0 440.6C652.7 440.2 649.3 439.7 646.0 439.3C642.7 438.9 639.3 438.6 636.0 438.3C632.7 438.0 629.3 437.8 626.0 437.7C622.7 437.5 619.3 437.3 616.0 437.2C612.7 437.0 609.3 436.8 606.0 436.8C602.7 436.7 599.3 436.6 596.0 436.7C592.7 436.8 589.3 437.0 586.0 437.2C582.7 437.4 579.3 437.8 576.0 438.1C572.7 438.4 569.3 438.7 566.0 438.8C562.7 438.9 559.3 438.9 556.0 438.9C552.7 438.8 549.3 438.6 546.0 438.6C542.7 438.6 539.3 438.6 536.0 438.7C532.7 438.9 529.3 439.3 526.0 439.7C522.7 440.0 519.3 440.6 516.0 441.0C512.7 441.4 509.3 441.7 506.0 441.8C502.7 441.9 499.3 441.7 496.0 441.4C492.7 441.2 489.3 440.6 486.0 440.1C482.7 439.6 479.3 439.0 476.0 438.6C472.7 438.2 467.7 437.8 466.0 437.7Z" fill="#dbc09a" opacity=".85"/><path d="M466.0 437.7C467.7 437.8 472.7 438.2 476.0 438.6C479.3 439.0 482.7 439.6 486.0 440.1C489.3 440.6 492.7 441.2 496.0 441.4C499.3 441.7 502.7 441.9 506.0 441.8C509.3 441.7 512.7 441.4 516.0 441.0C519.3 440.6 522.7 440.0 526.0 439.7C529.3 439.3 532.7 438.9 536.0 438.7C539.3 438.6 542.7 438.6 546.0 438.6C549.3 438.6 552.7 438.8 556.0 438.9C559.3 438.9 562.7 438.9 566.0 438.8C569.3 438.7 572.7 438.4 576.0 438.1C579.3 437.8 582.7 437.4 586.0 437.2C589.3 437.0 592.7 436.8 596.0 436.7C599.3 436.6 602.7 436.7 606.0 436.8C609.3 436.8 612.7 437.0 616.0 437.2C619.3 437.3 622.7 437.5 626.0 437.7C629.3 437.8 632.7 438.0 636.0 438.3C639.3 438.6 642.7 438.9 646.0 439.3C649.3 439.7 652.7 440.2 656.0 440.6C659.3 441.0 662.7 441.4 666.0 441.6C669.3 441.7 672.7 441.7 676.0 441.5C679.3 441.4 682.7 440.9 686.0 440.5C689.3 440.1 692.7 439.6 696.0 439.2C699.3 438.9 702.7 438.6 706.0 438.5C709.3 438.4 712.7 438.5 716.0 438.6C719.3 438.7 722.7 438.9 726.0 439.0C729.3 439.0 732.7 439.0 736.0 438.8C739.3 438.6 744.3 438.0 746.0 437.9L746.0 441.1C744.3 441.3 739.3 441.8 736.0 442.1C732.7 442.4 729.3 442.6 726.0 442.7C722.7 442.9 719.3 442.9 716.0 443.0C712.7 443.1 709.3 443.1 706.0 443.3C702.7 443.4 699.3 443.7 696.0 443.9C692.7 444.2 689.3 444.6 686.0 444.8C682.7 445.0 679.3 445.2 676.0 445.2C672.7 445.2 669.3 445.1 666.0 444.8C662.7 444.6 659.3 444.2 656.0 443.9C652.7 443.6 649.3 443.2 646.0 443.0C642.7 442.8 639.3 442.7 636.0 442.6C632.7 442.5 629.3 442.5 626.0 442.4C622.7 442.3 619.3 442.1 616.0 441.9C612.7 441.7 609.3 441.4 606.0 441.1C602.7 440.9 599.3 440.6 596.0 440.5C592.7 440.4 589.3 440.4 586.0 440.5C582.7 440.7 579.3 441.0 576.0 441.3C572.7 441.6 569.3 442.1 566.0 442.4C562.7 442.6 559.3 442.9 556.0 443.0C552.7 443.2 549.3 443.2 546.0 443.3C542.7 443.4 539.3 443.4 536.0 443.5C532.7 443.7 529.3 443.9 526.0 444.1C522.7 444.4 519.3 444.7 516.0 444.9C512.7 445.1 509.3 445.2 506.0 445.2C502.7 445.1 499.3 444.9 496.0 444.7C492.7 444.4 489.3 443.9 486.0 443.6C482.7 443.3 479.3 442.9 476.0 442.7C472.7 442.5 467.7 442.3 466.0 442.3Z" fill="#b58d62" opacity=".45"/><path d="M466.0 449.7C467.7 449.6 472.7 449.6 476.0 449.5C479.3 449.5 482.7 449.5 486.0 449.5C489.3 449.5 492.7 449.6 496.0 449.5C499.3 449.5 502.7 449.5 506.0 449.3C509.3 449.1 512.7 448.7 516.0 448.4C519.3 448.0 522.7 447.5 526.0 447.1C529.3 446.8 532.7 446.4 536.0 446.2C539.3 446.1 542.7 446.1 546.0 446.2C549.3 446.4 552.7 446.7 556.0 447.0C559.3 447.3 562.7 447.6 566.0 447.9C569.3 448.1 572.7 448.3 576.0 448.4C579.3 448.6 582.7 448.6 586.0 448.8C589.3 448.9 592.7 449.1 596.0 449.3C599.3 449.5 602.7 449.9 606.0 450.1C609.3 450.3 612.7 450.6 616.0 450.7C619.3 450.7 622.7 450.6 626.0 450.4C629.3 450.2 632.7 449.8 636.0 449.4C639.3 449.0 642.7 448.4 646.0 448.1C649.3 447.7 652.7 447.4 656.0 447.3C659.3 447.1 662.7 447.2 666.0 447.2C669.3 447.2 672.7 447.3 676.0 447.3C679.3 447.4 682.7 447.4 686.0 447.4C689.3 447.4 692.7 447.4 696.0 447.4C699.3 447.5 702.7 447.6 706.0 447.9C709.3 448.1 712.7 448.5 716.0 448.9C719.3 449.3 722.7 449.9 726.0 450.2C729.3 450.6 732.7 450.9 736.0 451.0C739.3 451.1 744.3 450.9 746.0 450.9L746.0 456.9C744.3 456.9 739.3 457.2 736.0 457.2C732.7 457.3 729.3 457.2 726.0 457.0C722.7 456.8 719.3 456.5 716.0 456.3C712.7 456.0 709.3 455.7 706.0 455.5C702.7 455.2 699.3 455.0 696.0 454.8C692.7 454.7 689.3 454.5 686.0 454.3C682.7 454.1 679.3 453.8 676.0 453.6C672.7 453.5 669.3 453.2 666.0 453.2C662.7 453.1 659.3 453.2 656.0 453.4C652.7 453.7 649.3 454.2 646.0 454.7C642.7 455.3 639.3 456.1 636.0 456.6C632.7 457.2 629.3 457.8 626.0 458.0C622.7 458.3 619.3 458.3 616.0 458.1C612.7 458.0 609.3 457.5 606.0 457.1C602.7 456.7 599.3 456.1 596.0 455.7C592.7 455.3 589.3 455.0 586.0 454.8C582.7 454.6 579.3 454.6 576.0 454.5C572.7 454.5 569.3 454.5 566.0 454.5C562.7 454.4 559.3 454.3 556.0 454.2C552.7 454.1 549.3 453.9 546.0 453.8C542.7 453.7 539.3 453.7 536.0 453.8C532.7 453.8 529.3 454.0 526.0 454.2C522.7 454.4 519.3 454.7 516.0 454.9C512.7 455.0 509.3 455.2 506.0 455.3C502.7 455.5 499.3 455.5 496.0 455.6C492.7 455.7 489.3 455.8 486.0 456.0C482.7 456.1 479.3 456.4 476.0 456.6C472.7 456.8 467.7 457.1 466.0 457.2Z" fill="#dbc09a" opacity=".85"/><path d="M466.0 457.2C467.7 457.1 472.7 456.8 476.0 456.6C479.3 456.4 482.7 456.1 486.0 456.0C489.3 455.8 492.7 455.7 496.0 455.6C499.3 455.5 502.7 455.5 506.0 455.3C509.3 455.2 512.7 455.0 516.0 454.9C519.3 454.7 522.7 454.4 526.0 454.2C529.3 454.0 532.7 453.8 536.0 453.8C539.3 453.7 542.7 453.7 546.0 453.8C549.3 453.9 552.7 454.1 556.0 454.2C559.3 454.3 562.7 454.4 566.0 454.5C569.3 454.5 572.7 454.5 576.0 454.5C579.3 454.6 582.7 454.6 586.0 454.8C589.3 455.0 592.7 455.3 596.0 455.7C599.3 456.1 602.7 456.7 606.0 457.1C609.3 457.5 612.7 458.0 616.0 458.1C619.3 458.3 622.7 458.3 626.0 458.0C629.3 457.8 632.7 457.2 636.0 456.6C639.3 456.1 642.7 455.3 646.0 454.7C649.3 454.2 652.7 453.7 656.0 453.4C659.3 453.2 662.7 453.1 666.0 453.2C669.3 453.2 672.7 453.5 676.0 453.6C679.3 453.8 682.7 454.1 686.0 454.3C689.3 454.5 692.7 454.7 696.0 454.8C699.3 455.0 702.7 455.2 706.0 455.5C709.3 455.7 712.7 456.0 716.0 456.3C719.3 456.5 722.7 456.8 726.0 457.0C729.3 457.2 732.7 457.3 736.0 457.2C739.3 457.2 744.3 456.9 746.0 456.9L746.0 461.7C744.3 461.7 739.3 461.9 736.0 461.8C732.7 461.7 729.3 461.4 726.0 461.0C722.7 460.7 719.3 460.1 716.0 459.7C712.7 459.3 709.3 458.9 706.0 458.7C702.7 458.4 699.3 458.3 696.0 458.2C692.7 458.2 689.3 458.2 686.0 458.2C682.7 458.2 679.3 458.2 676.0 458.1C672.7 458.1 669.3 458.0 666.0 458.0C662.7 458.0 659.3 457.9 656.0 458.1C652.7 458.2 649.3 458.5 646.0 458.9C642.7 459.2 639.3 459.8 636.0 460.2C632.7 460.6 629.3 461.0 626.0 461.2C622.7 461.4 619.3 461.5 616.0 461.5C612.7 461.4 609.3 461.1 606.0 460.9C602.7 460.7 599.3 460.3 596.0 460.1C592.7 459.9 589.3 459.7 586.0 459.6C582.7 459.4 579.3 459.4 576.0 459.2C572.7 459.1 569.3 458.9 566.0 458.7C562.7 458.4 559.3 458.1 556.0 457.8C552.7 457.5 549.3 457.2 546.0 457.0C542.7 456.9 539.3 456.9 536.0 457.0C532.7 457.2 529.3 457.6 526.0 457.9C522.7 458.3 519.3 458.8 516.0 459.2C512.7 459.5 509.3 459.9 506.0 460.1C502.7 460.3 499.3 460.3 496.0 460.3C492.7 460.4 489.3 460.3 486.0 460.3C482.7 460.3 479.3 460.3 476.0 460.3C472.7 460.4 467.7 460.4 466.0 460.5Z" fill="#b58d62" opacity=".45"/><path d="M466.0 466.2C467.7 466.2 472.7 466.4 476.0 466.3C479.3 466.2 482.7 465.9 486.0 465.6C489.3 465.2 492.7 464.7 496.0 464.3C499.3 463.8 502.7 463.3 506.0 463.0C509.3 462.7 512.7 462.5 516.0 462.5C519.3 462.4 522.7 462.6 526.0 462.7C529.3 462.9 532.7 463.1 536.0 463.3C539.3 463.4 542.7 463.5 546.0 463.6C549.3 463.7 552.7 463.8 556.0 464.0C559.3 464.1 562.7 464.3 566.0 464.6C569.3 465.0 572.7 465.4 576.0 465.8C579.3 466.2 582.7 466.7 586.0 467.0C589.3 467.3 592.7 467.5 596.0 467.5C599.3 467.5 602.7 467.2 606.0 467.0C609.3 466.7 612.7 466.2 616.0 465.9C619.3 465.6 622.7 465.3 626.0 465.1C629.3 464.8 632.7 464.7 636.0 464.6C639.3 464.5 642.7 464.4 646.0 464.3C649.3 464.2 652.7 464.0 656.0 463.8C659.3 463.6 662.7 463.3 666.0 463.2C669.3 463.1 672.7 463.0 676.0 463.2C679.3 463.3 682.7 463.6 686.0 464.0C689.3 464.3 692.7 464.9 696.0 465.4C699.3 465.8 702.7 466.4 706.0 466.7C709.3 467.0 712.7 467.2 716.0 467.3C719.3 467.4 722.7 467.3 726.0 467.3C729.3 467.3 732.7 467.2 736.0 467.2C739.3 467.1 744.3 467.2 746.0 467.2L746.0 474.0C744.3 473.9 739.3 473.5 736.0 473.4C732.7 473.3 729.3 473.3 726.0 473.3C722.7 473.3 719.3 473.5 716.0 473.5C712.7 473.5 709.3 473.5 706.0 473.4C702.7 473.3 699.3 473.0 696.0 472.7C692.7 472.4 689.3 471.9 686.0 471.5C682.7 471.2 679.3 470.8 676.0 470.6C672.7 470.4 669.3 470.2 666.0 470.2C662.7 470.1 659.3 470.1 656.0 470.2C652.7 470.2 649.3 470.2 646.0 470.3C642.7 470.4 639.3 470.5 636.0 470.7C632.7 471.0 629.3 471.3 626.0 471.7C622.7 472.1 619.3 472.7 616.0 473.1C612.7 473.6 609.3 474.2 606.0 474.5C602.7 474.8 599.3 475.0 596.0 475.0C592.7 474.9 589.3 474.5 586.0 474.0C582.7 473.6 579.3 472.8 576.0 472.3C572.7 471.7 569.3 471.1 566.0 470.7C562.7 470.3 559.3 470.1 556.0 470.0C552.7 469.9 549.3 470.1 546.0 470.2C542.7 470.2 539.3 470.4 536.0 470.4C532.7 470.4 529.3 470.3 526.0 470.3C522.7 470.2 519.3 470.1 516.0 470.0C512.7 470.0 509.3 470.0 506.0 470.1C502.7 470.3 499.3 470.5 496.0 470.8C492.7 471.0 489.3 471.4 486.0 471.7C482.7 471.9 479.3 472.2 476.0 472.3C472.7 472.5 467.7 472.6 466.0 472.6Z" fill="#dbc09a" opacity=".85"/><path d="M466.0 472.6C467.7 472.6 472.7 472.5 476.0 472.3C479.3 472.2 482.7 471.9 486.0 471.7C489.3 471.4 492.7 471.0 496.0 470.8C499.3 470.5 502.7 470.3 506.0 470.1C509.3 470.0 512.7 470.0 516.0 470.0C519.3 470.1 522.7 470.2 526.0 470.3C529.3 470.3 532.7 470.4 536.0 470.4C539.3 470.4 542.7 470.2 546.0 470.2C549.3 470.1 552.7 469.9 556.0 470.0C559.3 470.1 562.7 470.3 566.0 470.7C569.3 471.1 572.7 471.7 576.0 472.3C579.3 472.8 582.7 473.6 586.0 474.0C589.3 474.5 592.7 474.9 596.0 475.0C599.3 475.0 602.7 474.8 606.0 474.5C609.3 474.2 612.7 473.6 616.0 473.1C619.3 472.7 622.7 472.1 626.0 471.7C629.3 471.3 632.7 471.0 636.0 470.7C639.3 470.5 642.7 470.4 646.0 470.3C649.3 470.2 652.7 470.2 656.0 470.2C659.3 470.1 662.7 470.1 666.0 470.2C669.3 470.2 672.7 470.4 676.0 470.6C679.3 470.8 682.7 471.2 686.0 471.5C689.3 471.9 692.7 472.4 696.0 472.7C699.3 473.0 702.7 473.3 706.0 473.4C709.3 473.5 712.7 473.5 716.0 473.5C719.3 473.5 722.7 473.3 726.0 473.3C729.3 473.3 732.7 473.3 736.0 473.4C739.3 473.5 744.3 473.9 746.0 474.0L746.0 478.0C744.3 478.0 739.3 477.9 736.0 478.0C732.7 478.0 729.3 478.1 726.0 478.1C722.7 478.1 719.3 478.2 716.0 478.1C712.7 478.0 709.3 477.8 706.0 477.5C702.7 477.2 699.3 476.6 696.0 476.2C692.7 475.7 689.3 475.1 686.0 474.8C682.7 474.4 679.3 474.1 676.0 474.0C672.7 473.8 669.3 473.9 666.0 474.0C662.7 474.1 659.3 474.4 656.0 474.6C652.7 474.8 649.3 475.0 646.0 475.1C642.7 475.2 639.3 475.3 636.0 475.4C632.7 475.5 629.3 475.6 626.0 475.9C622.7 476.1 619.3 476.4 616.0 476.7C612.7 477.0 609.3 477.5 606.0 477.8C602.7 478.0 599.3 478.3 596.0 478.3C592.7 478.3 589.3 478.1 586.0 477.8C582.7 477.5 579.3 477.0 576.0 476.6C572.7 476.2 569.3 475.8 566.0 475.4C562.7 475.1 559.3 474.9 556.0 474.8C552.7 474.6 549.3 474.5 546.0 474.4C542.7 474.3 539.3 474.2 536.0 474.1C532.7 473.9 529.3 473.7 526.0 473.5C522.7 473.4 519.3 473.2 516.0 473.3C512.7 473.3 509.3 473.5 506.0 473.8C502.7 474.1 499.3 474.6 496.0 475.1C492.7 475.5 489.3 476.0 486.0 476.4C482.7 476.7 479.3 477.0 476.0 477.1C472.7 477.2 467.7 477.0 466.0 477.0Z" fill="#b58d62" opacity=".45"/><path d="M466.0 480.9C467.7 480.9 472.7 480.9 476.0 480.9C479.3 480.8 482.7 480.7 486.0 480.7C489.3 480.8 492.7 480.8 496.0 481.0C499.3 481.3 502.7 481.7 506.0 482.1C509.3 482.5 512.7 483.0 516.0 483.4C519.3 483.8 522.7 484.2 526.0 484.5C529.3 484.7 532.7 484.8 536.0 484.8C539.3 484.9 542.7 484.7 546.0 484.7C549.3 484.7 552.7 484.7 556.0 484.7C559.3 484.8 562.7 485.0 566.0 485.0C569.3 485.1 572.7 485.2 576.0 485.1C579.3 485.1 582.7 484.9 586.0 484.6C589.3 484.3 592.7 483.8 596.0 483.5C599.3 483.1 602.7 482.6 606.0 482.3C609.3 482.1 612.7 481.9 616.0 481.8C619.3 481.7 622.7 481.9 626.0 481.9C629.3 482.0 632.7 482.1 636.0 482.1C639.3 482.2 642.7 482.1 646.0 482.1C649.3 482.1 652.7 482.0 656.0 482.0C659.3 482.1 662.7 482.1 666.0 482.4C669.3 482.6 672.7 483.0 676.0 483.4C679.3 483.8 682.7 484.4 686.0 484.8C689.3 485.2 692.7 485.6 696.0 485.8C699.3 486.0 702.7 486.1 706.0 486.1C709.3 486.1 712.7 486.0 716.0 486.0C719.3 486.0 722.7 486.0 726.0 486.0C729.3 486.1 732.7 486.2 736.0 486.3C739.3 486.4 744.3 486.4 746.0 486.4L746.0 493.7C744.3 493.6 739.3 493.3 736.0 493.1C732.7 492.8 729.3 492.4 726.0 492.2C722.7 492.1 719.3 492.0 716.0 492.0C712.7 492.0 709.3 492.2 706.0 492.3C702.7 492.4 699.3 492.6 696.0 492.6C692.7 492.5 689.3 492.4 686.0 492.1C682.7 491.9 679.3 491.4 676.0 491.0C672.7 490.6 669.3 490.1 666.0 489.8C662.7 489.4 659.3 489.1 656.0 488.9C652.7 488.7 649.3 488.5 646.0 488.4C642.7 488.3 639.3 488.2 636.0 488.2C632.7 488.1 629.3 488.0 626.0 488.1C622.7 488.1 619.3 488.2 616.0 488.5C612.7 488.7 609.3 489.2 606.0 489.6C602.7 490.0 599.3 490.6 596.0 491.0C592.7 491.5 589.3 491.9 586.0 492.1C582.7 492.2 579.3 492.2 576.0 492.1C572.7 492.0 569.3 491.6 566.0 491.4C562.7 491.2 559.3 490.9 556.0 490.8C552.7 490.7 549.3 490.7 546.0 490.8C542.7 490.9 539.3 491.3 536.0 491.4C532.7 491.5 529.3 491.7 526.0 491.7C522.7 491.6 519.3 491.3 516.0 491.0C512.7 490.7 509.3 490.1 506.0 489.6C502.7 489.1 499.3 488.5 496.0 488.1C492.7 487.7 489.3 487.4 486.0 487.2C482.7 487.0 479.3 487.0 476.0 486.9C472.7 486.9 467.7 486.9 466.0 486.9Z" fill="#dbc09a" opacity=".85"/><path d="M466.0 486.9C467.7 486.9 472.7 486.9 476.0 486.9C479.3 487.0 482.7 487.0 486.0 487.2C489.3 487.4 492.7 487.7 496.0 488.1C499.3 488.5 502.7 489.1 506.0 489.6C509.3 490.1 512.7 490.7 516.0 491.0C519.3 491.3 522.7 491.6 526.0 491.7C529.3 491.7 532.7 491.5 536.0 491.4C539.3 491.3 542.7 490.9 546.0 490.8C549.3 490.7 552.7 490.7 556.0 490.8C559.3 490.9 562.7 491.2 566.0 491.4C569.3 491.6 572.7 492.0 576.0 492.1C579.3 492.2 582.7 492.2 586.0 492.1C589.3 491.9 592.7 491.5 596.0 491.0C599.3 490.6 602.7 490.0 606.0 489.6C609.3 489.2 612.7 488.7 616.0 488.5C619.3 488.2 622.7 488.1 626.0 488.1C629.3 488.0 632.7 488.1 636.0 488.2C639.3 488.2 642.7 488.3 646.0 488.4C649.3 488.5 652.7 488.7 656.0 488.9C659.3 489.1 662.7 489.4 666.0 489.8C669.3 490.1 672.7 490.6 676.0 491.0C679.3 491.4 682.7 491.9 686.0 492.1C689.3 492.4 692.7 492.5 696.0 492.6C699.3 492.6 702.7 492.4 706.0 492.3C709.3 492.2 712.7 492.0 716.0 492.0C719.3 492.0 722.7 492.1 726.0 492.2C729.3 492.4 732.7 492.8 736.0 493.1C739.3 493.3 744.3 493.6 746.0 493.7L746.0 497.2C744.3 497.2 739.3 497.2 736.0 497.1C732.7 497.0 729.3 496.9 726.0 496.8C722.7 496.8 719.3 496.8 716.0 496.8C712.7 496.8 709.3 496.9 706.0 496.9C702.7 496.9 699.3 496.8 696.0 496.6C692.7 496.4 689.3 496.0 686.0 495.6C682.7 495.2 679.3 494.6 676.0 494.2C672.7 493.8 669.3 493.4 666.0 493.2C662.7 492.9 659.3 492.9 656.0 492.8C652.7 492.8 649.3 492.9 646.0 492.9C642.7 492.9 639.3 493.0 636.0 492.9C632.7 492.9 629.3 492.8 626.0 492.7C622.7 492.7 619.3 492.5 616.0 492.6C612.7 492.7 609.3 492.9 606.0 493.1C602.7 493.4 599.3 493.9 596.0 494.3C592.7 494.6 589.3 495.1 586.0 495.4C582.7 495.7 579.3 495.9 576.0 495.9C572.7 496.0 569.3 495.9 566.0 495.8C562.7 495.8 559.3 495.6 556.0 495.5C552.7 495.5 549.3 495.5 546.0 495.5C542.7 495.5 539.3 495.7 536.0 495.6C532.7 495.6 529.3 495.5 526.0 495.3C522.7 495.0 519.3 494.6 516.0 494.2C512.7 493.8 509.3 493.3 506.0 492.9C502.7 492.5 499.3 492.1 496.0 491.8C492.7 491.6 489.3 491.6 486.0 491.5C482.7 491.5 479.3 491.6 476.0 491.7C472.7 491.7 467.7 491.7 466.0 491.7Z" fill="#b58d62" opacity=".45"/><path d="M466.0 501.2C467.7 501.4 472.7 502.0 476.0 502.3C479.3 502.5 482.7 502.6 486.0 502.7C489.3 502.8 492.7 502.8 496.0 502.8C499.3 502.9 502.7 503.0 506.0 503.1C509.3 503.2 512.7 503.4 516.0 503.4C519.3 503.4 522.7 503.3 526.0 503.1C529.3 502.9 532.7 502.5 536.0 502.1C539.3 501.7 542.7 501.1 546.0 500.6C549.3 500.2 552.7 499.8 556.0 499.6C559.3 499.3 562.7 499.3 566.0 499.3C569.3 499.3 572.7 499.5 576.0 499.6C579.3 499.7 582.7 499.8 586.0 499.9C589.3 500.0 592.7 500.1 596.0 500.2C599.3 500.3 602.7 500.3 606.0 500.6C609.3 500.8 612.7 501.1 616.0 501.6C619.3 502.0 622.7 502.6 626.0 503.1C629.3 503.6 632.7 504.2 636.0 504.5C639.3 504.8 642.7 505.1 646.0 505.1C649.3 505.2 652.7 505.1 656.0 504.9C659.3 504.8 662.7 504.5 666.0 504.4C669.3 504.2 672.7 504.1 676.0 504.0C679.3 503.9 682.7 503.9 686.0 503.7C689.3 503.6 692.7 503.4 696.0 503.2C699.3 502.9 702.7 502.4 706.0 502.1C709.3 501.7 712.7 501.2 716.0 500.9C719.3 500.6 722.7 500.3 726.0 500.3C729.3 500.3 732.7 500.5 736.0 500.7C739.3 500.9 744.3 501.5 746.0 501.7L746.0 508.9C744.3 508.7 739.3 507.8 736.0 507.3C732.7 506.9 729.3 506.5 726.0 506.5C722.7 506.4 719.3 506.6 716.0 506.9C712.7 507.2 709.3 507.9 706.0 508.4C702.7 508.9 699.3 509.6 696.0 510.0C692.7 510.5 689.3 510.9 686.0 511.1C682.7 511.4 679.3 511.5 676.0 511.6C672.7 511.7 669.3 511.7 666.0 511.7C662.7 511.7 659.3 511.7 656.0 511.7C652.7 511.6 649.3 511.5 646.0 511.3C642.7 511.2 639.3 510.8 636.0 510.5C632.7 510.2 629.3 509.7 626.0 509.3C622.7 509.0 619.3 508.6 616.0 508.3C612.7 508.1 609.3 508.0 606.0 507.9C602.7 507.8 599.3 507.8 596.0 507.8C592.7 507.7 589.3 507.6 586.0 507.3C582.7 507.1 579.3 506.7 576.0 506.4C572.7 506.1 569.3 505.7 566.0 505.6C562.7 505.4 559.3 505.4 556.0 505.6C552.7 505.8 549.3 506.3 546.0 506.8C542.7 507.3 539.3 508.2 536.0 508.8C532.7 509.4 529.3 510.0 526.0 510.4C522.7 510.7 519.3 510.9 516.0 511.0C512.7 511.0 509.3 510.8 506.0 510.6C502.7 510.4 499.3 510.1 496.0 509.8C492.7 509.6 489.3 509.3 486.0 509.1C482.7 508.8 479.3 508.6 476.0 508.3C472.7 508.0 467.7 507.5 466.0 507.3Z" fill="#dbc09a" opacity=".85"/><path d="M466.0 507.3C467.7 507.5 472.7 508.0 476.0 508.3C479.3 508.6 482.7 508.8 486.0 509.1C489.3 509.3 492.7 509.6 496.0 509.8C499.3 510.1 502.7 510.4 506.0 510.6C509.3 510.8 512.7 511.0 516.0 511.0C519.3 510.9 522.7 510.7 526.0 510.4C529.3 510.0 532.7 509.4 536.0 508.8C539.3 508.2 542.7 507.3 546.0 506.8C549.3 506.3 552.7 505.8 556.0 505.6C559.3 505.4 562.7 505.4 566.0 505.6C569.3 505.7 572.7 506.1 576.0 506.4C579.3 506.7 582.7 507.1 586.0 507.3C589.3 507.6 592.7 507.7 596.0 507.8C599.3 507.8 602.7 507.8 606.0 507.9C609.3 508.0 612.7 508.1 616.0 508.3C619.3 508.6 622.7 509.0 626.0 509.3C629.3 509.7 632.7 510.2 636.0 510.5C639.3 510.8 642.7 511.2 646.0 511.3C649.3 511.5 652.7 511.6 656.0 511.7C659.3 511.7 662.7 511.7 666.0 511.7C669.3 511.7 672.7 511.7 676.0 511.6C679.3 511.5 682.7 511.4 686.0 511.1C689.3 510.9 692.7 510.5 696.0 510.0C699.3 509.6 702.7 508.9 706.0 508.4C709.3 507.9 712.7 507.2 716.0 506.9C719.3 506.6 722.7 506.4 726.0 506.5C729.3 506.5 732.7 506.9 736.0 507.3C739.3 507.8 744.3 508.7 746.0 508.9L746.0 512.5C744.3 512.3 739.3 511.7 736.0 511.5C732.7 511.3 729.3 511.1 726.0 511.1C722.7 511.1 719.3 511.4 716.0 511.7C712.7 512.0 709.3 512.5 706.0 512.9C702.7 513.2 699.3 513.7 696.0 514.0C692.7 514.2 689.3 514.4 686.0 514.5C682.7 514.7 679.3 514.7 676.0 514.8C672.7 514.9 669.3 515.0 666.0 515.2C662.7 515.3 659.3 515.6 656.0 515.7C652.7 515.9 649.3 516.0 646.0 515.9C642.7 515.9 639.3 515.6 636.0 515.3C632.7 515.0 629.3 514.4 626.0 513.9C622.7 513.4 619.3 512.8 616.0 512.4C612.7 511.9 609.3 511.6 606.0 511.4C602.7 511.1 599.3 511.1 596.0 511.0C592.7 510.9 589.3 510.8 586.0 510.7C582.7 510.6 579.3 510.5 576.0 510.4C572.7 510.3 569.3 510.1 566.0 510.1C562.7 510.1 559.3 510.1 556.0 510.4C552.7 510.6 549.3 511.0 546.0 511.4C542.7 511.9 539.3 512.5 536.0 512.9C532.7 513.3 529.3 513.7 526.0 513.9C522.7 514.1 519.3 514.2 516.0 514.2C512.7 514.2 509.3 514.0 506.0 513.9C502.7 513.8 499.3 513.7 496.0 513.6C492.7 513.6 489.3 513.6 486.0 513.5C482.7 513.4 479.3 513.3 476.0 513.1C472.7 512.8 467.7 512.2 466.0 512.0Z" fill="#b58d62" opacity=".45"/><path d="M466.0 514.9C467.7 515.0 472.7 515.4 476.0 515.8C479.3 516.2 482.7 516.8 486.0 517.3C489.3 517.7 492.7 518.3 496.0 518.7C499.3 519.1 502.7 519.3 506.0 519.5C509.3 519.6 512.7 519.6 516.0 519.6C519.3 519.6 522.7 519.5 526.0 519.5C529.3 519.5 532.7 519.6 536.0 519.7C539.3 519.7 542.7 519.9 546.0 519.9C549.3 519.9 552.7 519.8 556.0 519.6C559.3 519.4 562.7 519.0 566.0 518.6C569.3 518.2 572.7 517.7 576.0 517.3C579.3 517.0 582.7 516.6 586.0 516.4C589.3 516.2 592.7 516.2 596.0 516.2C599.3 516.2 602.7 516.4 606.0 516.5C609.3 516.5 612.7 516.6 616.0 516.6C619.3 516.7 622.7 516.6 626.0 516.6C629.3 516.6 632.7 516.6 636.0 516.8C639.3 517.0 642.7 517.3 646.0 517.7C649.3 518.1 652.7 518.7 656.0 519.1C659.3 519.6 662.7 520.2 666.0 520.6C669.3 521.0 672.7 521.2 676.0 521.4C679.3 521.6 682.7 521.6 686.0 521.6C689.3 521.6 692.7 521.6 696.0 521.6C699.3 521.7 702.7 521.8 706.0 521.9C709.3 522.0 712.7 522.2 716.0 522.2C719.3 522.2 722.7 522.2 726.0 522.0C729.3 521.8 732.7 521.4 736.0 521.0C739.3 520.6 744.3 519.9 746.0 519.7L746.0 527.2C744.3 527.4 739.3 528.2 736.0 528.6C732.7 528.9 729.3 529.2 726.0 529.2C722.7 529.2 719.3 529.0 716.0 528.8C712.7 528.6 709.3 528.2 706.0 528.0C702.7 527.8 699.3 527.7 696.0 527.6C692.7 527.6 689.3 527.8 686.0 527.9C682.7 528.0 679.3 528.3 676.0 528.3C672.7 528.3 669.3 528.3 666.0 528.0C662.7 527.7 659.3 527.2 656.0 526.7C652.7 526.2 649.3 525.5 646.0 525.0C642.7 524.5 639.3 523.9 636.0 523.6C632.7 523.2 629.3 523.0 626.0 522.8C622.7 522.7 619.3 522.7 616.0 522.6C612.7 522.6 609.3 522.7 606.0 522.7C602.7 522.8 599.3 522.8 596.0 523.0C592.7 523.2 589.3 523.4 586.0 523.8C582.7 524.1 579.3 524.5 576.0 524.9C572.7 525.3 569.3 525.8 566.0 526.0C562.7 526.3 559.3 526.4 556.0 526.5C552.7 526.5 549.3 526.3 546.0 526.2C542.7 526.0 539.3 525.8 536.0 525.7C532.7 525.6 529.3 525.6 526.0 525.7C522.7 525.8 519.3 526.1 516.0 526.3C512.7 526.5 509.3 526.8 506.0 526.8C502.7 526.8 499.3 526.6 496.0 526.3C492.7 525.9 489.3 525.3 486.0 524.7C482.7 524.1 479.3 523.3 476.0 522.7C472.7 522.2 467.7 521.5 466.0 521.3Z" fill="#dbc09a" opacity=".85"/><path d="M466.0 521.3C467.7 521.5 472.7 522.2 476.0 522.7C479.3 523.3 482.7 524.1 486.0 524.7C489.3 525.3 492.7 525.9 496.0 526.3C499.3 526.6 502.7 526.8 506.0 526.8C509.3 526.8 512.7 526.5 516.0 526.3C519.3 526.1 522.7 525.8 526.0 525.7C529.3 525.6 532.7 525.6 536.0 525.7C539.3 525.8 542.7 526.0 546.0 526.2C549.3 526.3 552.7 526.5 556.0 526.5C559.3 526.4 562.7 526.3 566.0 526.0C569.3 525.8 572.7 525.3 576.0 524.9C579.3 524.5 582.7 524.1 586.0 523.8C589.3 523.4 592.7 523.2 596.0 523.0C599.3 522.8 602.7 522.8 606.0 522.7C609.3 522.7 612.7 522.6 616.0 522.6C619.3 522.7 622.7 522.7 626.0 522.8C629.3 523.0 632.7 523.2 636.0 523.6C639.3 523.9 642.7 524.5 646.0 525.0C649.3 525.5 652.7 526.2 656.0 526.7C659.3 527.2 662.7 527.7 666.0 528.0C669.3 528.3 672.7 528.3 676.0 528.3C679.3 528.3 682.7 528.0 686.0 527.9C689.3 527.8 692.7 527.6 696.0 527.6C699.3 527.7 702.7 527.8 706.0 528.0C709.3 528.2 712.7 528.6 716.0 528.8C719.3 529.0 722.7 529.2 726.0 529.2C729.3 529.2 732.7 528.9 736.0 528.6C739.3 528.2 744.3 527.4 746.0 527.2L746.0 530.5C744.3 530.7 739.3 531.4 736.0 531.8C732.7 532.2 729.3 532.6 726.0 532.8C722.7 533.0 719.3 533.0 716.0 533.0C712.7 533.0 709.3 532.8 706.0 532.7C702.7 532.6 699.3 532.5 696.0 532.4C692.7 532.4 689.3 532.4 686.0 532.4C682.7 532.4 679.3 532.4 676.0 532.2C672.7 532.0 669.3 531.8 666.0 531.4C662.7 531.0 659.3 530.4 656.0 529.9C652.7 529.5 649.3 528.9 646.0 528.5C642.7 528.1 639.3 527.8 636.0 527.6C632.7 527.4 629.3 527.4 626.0 527.4C622.7 527.4 619.3 527.5 616.0 527.4C612.7 527.4 609.3 527.3 606.0 527.3C602.7 527.2 599.3 527.0 596.0 527.0C592.7 527.0 589.3 527.0 586.0 527.2C582.7 527.4 579.3 527.8 576.0 528.1C572.7 528.5 569.3 529.0 566.0 529.4C562.7 529.8 559.3 530.2 556.0 530.4C552.7 530.6 549.3 530.7 546.0 530.7C542.7 530.7 539.3 530.5 536.0 530.5C532.7 530.4 529.3 530.3 526.0 530.3C522.7 530.3 519.3 530.4 516.0 530.4C512.7 530.4 509.3 530.4 506.0 530.3C502.7 530.1 499.3 529.9 496.0 529.5C492.7 529.1 489.3 528.5 486.0 528.1C482.7 527.6 479.3 527.0 476.0 526.6C472.7 526.2 467.7 525.8 466.0 525.7Z" fill="#b58d62" opacity=".45"/><path d="M466.0 531.4C467.7 531.4 472.7 531.4 476.0 531.4C479.3 531.4 482.7 531.2 486.0 531.2C489.3 531.2 492.7 531.2 496.0 531.4C499.3 531.6 502.7 531.9 506.0 532.3C509.3 532.7 512.7 533.3 516.0 533.7C519.3 534.2 522.7 534.7 526.0 535.0C529.3 535.3 532.7 535.4 536.0 535.6C539.3 535.7 542.7 535.6 546.0 535.7C549.3 535.7 552.7 535.8 556.0 535.9C559.3 536.0 562.7 536.2 566.0 536.3C569.3 536.4 572.7 536.6 576.0 536.7C579.3 536.7 582.7 536.6 586.0 536.4C589.3 536.2 592.7 535.8 596.0 535.5C599.3 535.2 602.7 534.7 606.0 534.4C609.3 534.1 612.7 533.9 616.0 533.8C619.3 533.7 622.7 533.7 626.0 533.8C629.3 533.8 632.7 533.9 636.0 534.0C639.3 534.0 642.7 534.0 646.0 533.9C649.3 533.9 652.7 533.7 656.0 533.7C659.3 533.7 662.7 533.7 666.0 533.9C669.3 534.1 672.7 534.5 676.0 534.8C679.3 535.2 682.7 535.8 686.0 536.3C689.3 536.7 692.7 537.2 696.0 537.5C699.3 537.8 702.7 537.9 706.0 538.1C709.3 538.2 712.7 538.1 716.0 538.2C719.3 538.3 722.7 538.3 726.0 538.4C729.3 538.5 732.7 538.7 736.0 538.9C739.3 539.0 744.3 539.2 746.0 539.3L746.0 546.5C744.3 546.4 739.3 545.9 736.0 545.6C732.7 545.2 729.3 544.8 726.0 544.6C722.7 544.3 719.3 544.2 716.0 544.2C712.7 544.2 709.3 544.3 706.0 544.4C702.7 544.4 699.3 544.5 696.0 544.3C692.7 544.2 689.3 544.0 686.0 543.7C682.7 543.3 679.3 542.8 676.0 542.4C672.7 542.0 669.3 541.6 666.0 541.3C662.7 540.9 659.3 540.7 656.0 540.5C652.7 540.3 649.3 540.3 646.0 540.2C642.7 540.1 639.3 540.0 636.0 540.0C632.7 539.9 629.3 539.9 626.0 540.0C622.7 540.1 619.3 540.2 616.0 540.5C612.7 540.8 609.3 541.3 606.0 541.7C602.7 542.1 599.3 542.7 596.0 543.1C592.7 543.4 589.3 543.8 586.0 543.8C582.7 543.9 579.3 543.8 576.0 543.6C572.7 543.4 569.3 542.9 566.0 542.6C562.7 542.3 559.3 542.0 556.0 541.9C552.7 541.7 549.3 541.8 546.0 541.8C542.7 541.9 539.3 542.2 536.0 542.2C532.7 542.3 529.3 542.4 526.0 542.2C522.7 542.1 519.3 541.7 516.0 541.3C512.7 540.9 509.3 540.3 506.0 539.8C502.7 539.3 499.3 538.8 496.0 538.4C492.7 538.0 489.3 537.8 486.0 537.6C482.7 537.5 479.3 537.4 476.0 537.4C472.7 537.4 467.7 537.5 466.0 537.5Z" fill="#dbc09a" opacity=".85"/><path d="M466.0 537.5C467.7 537.5 472.7 537.4 476.0 537.4C479.3 537.4 482.7 537.5 486.0 537.6C489.3 537.8 492.7 538.0 496.0 538.4C499.3 538.8 502.7 539.3 506.0 539.8C509.3 540.3 512.7 540.9 516.0 541.3C519.3 541.7 522.7 542.1 526.0 542.2C529.3 542.4 532.7 542.3 536.0 542.2C539.3 542.2 542.7 541.9 546.0 541.8C549.3 541.8 552.7 541.7 556.0 541.9C559.3 542.0 562.7 542.3 566.0 542.6C569.3 542.9 572.7 543.4 576.0 543.6C579.3 543.8 582.7 543.9 586.0 543.8C589.3 543.8 592.7 543.4 596.0 543.1C599.3 542.7 602.7 542.1 606.0 541.7C609.3 541.3 612.7 540.8 616.0 540.5C619.3 540.2 622.7 540.1 626.0 540.0C629.3 539.9 632.7 539.9 636.0 540.0C639.3 540.0 642.7 540.1 646.0 540.2C649.3 540.3 652.7 540.3 656.0 540.5C659.3 540.7 662.7 540.9 666.0 541.3C669.3 541.6 672.7 542.0 676.0 542.4C679.3 542.8 682.7 543.3 686.0 543.7C689.3 544.0 692.7 544.2 696.0 544.3C699.3 544.5 702.7 544.4 706.0 544.4C709.3 544.3 712.7 544.2 716.0 544.2C719.3 544.2 722.7 544.3 726.0 544.6C729.3 544.8 732.7 545.2 736.0 545.6C739.3 545.9 744.3 546.4 746.0 546.5L746.0 550.1C744.3 550.0 739.3 549.8 736.0 549.7C732.7 549.5 729.3 549.3 726.0 549.2C722.7 549.1 719.3 549.1 716.0 549.0C712.7 548.9 709.3 549.0 706.0 548.9C702.7 548.7 699.3 548.6 696.0 548.3C692.7 548.0 689.3 547.5 686.0 547.1C682.7 546.6 679.3 546.0 676.0 545.6C672.7 545.3 669.3 544.9 666.0 544.7C662.7 544.5 659.3 544.5 656.0 544.5C652.7 544.5 649.3 544.7 646.0 544.7C642.7 544.8 639.3 544.8 636.0 544.8C632.7 544.7 629.3 544.6 626.0 544.6C622.7 544.5 619.3 544.5 616.0 544.6C612.7 544.7 609.3 544.9 606.0 545.2C602.7 545.5 599.3 546.0 596.0 546.3C592.7 546.6 589.3 547.0 586.0 547.2C582.7 547.4 579.3 547.5 576.0 547.5C572.7 547.4 569.3 547.2 566.0 547.1C562.7 547.0 559.3 546.8 556.0 546.7C552.7 546.6 549.3 546.5 546.0 546.5C542.7 546.4 539.3 546.5 536.0 546.4C532.7 546.2 529.3 546.1 526.0 545.8C522.7 545.5 519.3 545.0 516.0 544.5C512.7 544.1 509.3 543.5 506.0 543.1C502.7 542.7 499.3 542.4 496.0 542.2C492.7 542.0 489.3 542.0 486.0 542.0C482.7 542.0 479.3 542.2 476.0 542.2C472.7 542.2 467.7 542.2 466.0 542.2Z" fill="#b58d62" opacity=".45"/><path d="M466.0 545.3C467.7 545.5 472.7 546.2 476.0 546.6C479.3 547.0 482.7 547.5 486.0 547.7C489.3 548.0 492.7 548.2 496.0 548.4C499.3 548.6 502.7 548.6 506.0 548.8C509.3 549.0 512.7 549.2 516.0 549.4C519.3 549.7 522.7 550.0 526.0 550.1C529.3 550.2 532.7 550.4 536.0 550.3C539.3 550.2 542.7 549.9 546.0 549.6C549.3 549.3 552.7 548.7 556.0 548.4C559.3 548.0 562.7 547.6 566.0 547.4C569.3 547.1 572.7 547.1 576.0 547.1C579.3 547.1 582.7 547.3 586.0 547.5C589.3 547.7 592.7 547.9 596.0 548.0C599.3 548.2 602.7 548.3 606.0 548.4C609.3 548.6 612.7 548.6 616.0 548.9C619.3 549.1 622.7 549.4 626.0 549.8C629.3 550.2 632.7 550.7 636.0 551.2C639.3 551.6 642.7 552.1 646.0 552.4C649.3 552.7 652.7 552.8 656.0 552.8C659.3 552.8 662.7 552.5 666.0 552.3C669.3 552.1 672.7 551.7 676.0 551.4C679.3 551.1 682.7 550.9 686.0 550.8C689.3 550.6 692.7 550.6 696.0 550.5C699.3 550.5 702.7 550.5 706.0 550.4C709.3 550.3 712.7 550.1 716.0 549.9C719.3 549.8 722.7 549.6 726.0 549.5C729.3 549.5 732.7 549.5 736.0 549.8C739.3 550.0 744.3 550.7 746.0 550.9L746.0 557.7C744.3 557.6 739.3 557.2 736.0 557.1C732.7 557.0 729.3 557.1 726.0 557.1C722.7 557.2 719.3 557.3 716.0 557.3C712.7 557.3 709.3 557.3 706.0 557.2C702.7 557.1 699.3 556.9 696.0 556.8C692.7 556.7 689.3 556.6 686.0 556.8C682.7 556.9 679.3 557.2 676.0 557.6C672.7 558.0 669.3 558.6 666.0 559.0C662.7 559.4 659.3 559.9 656.0 560.1C652.7 560.3 649.3 560.2 646.0 560.0C642.7 559.7 639.3 559.2 636.0 558.6C632.7 558.1 629.3 557.3 626.0 556.7C622.7 556.2 619.3 555.6 616.0 555.2C612.7 554.8 609.3 554.6 606.0 554.4C602.7 554.3 599.3 554.2 596.0 554.2C592.7 554.1 589.3 554.1 586.0 554.1C582.7 554.2 579.3 554.2 576.0 554.3C572.7 554.4 569.3 554.7 566.0 554.9C562.7 555.2 559.3 555.6 556.0 555.9C552.7 556.1 549.3 556.5 546.0 556.6C542.7 556.8 539.3 556.8 536.0 556.7C532.7 556.6 529.3 556.3 526.0 556.1C522.7 555.9 519.3 555.7 516.0 555.5C512.7 555.4 509.3 555.4 506.0 555.3C502.7 555.3 499.3 555.5 496.0 555.5C492.7 555.5 489.3 555.5 486.0 555.3C482.7 555.1 479.3 554.6 476.0 554.2C472.7 553.7 467.7 552.7 466.0 552.4Z" fill="#dbc09a" opacity=".85"/><path d="M466.0 552.4C467.7 552.7 472.7 553.7 476.0 554.2C479.3 554.6 482.7 555.1 486.0 555.3C489.3 555.5 492.7 555.5 496.0 555.5C499.3 555.5 502.7 555.3 506.0 555.3C509.3 555.4 512.7 555.4 516.0 555.5C519.3 555.7 522.7 555.9 526.0 556.1C529.3 556.3 532.7 556.6 536.0 556.7C539.3 556.8 542.7 556.8 546.0 556.6C549.3 556.5 552.7 556.1 556.0 555.9C559.3 555.6 562.7 555.2 566.0 554.9C569.3 554.7 572.7 554.4 576.0 554.3C579.3 554.2 582.7 554.2 586.0 554.1C589.3 554.1 592.7 554.1 596.0 554.2C599.3 554.2 602.7 554.3 606.0 554.4C609.3 554.6 612.7 554.8 616.0 555.2C619.3 555.6 622.7 556.2 626.0 556.7C629.3 557.3 632.7 558.1 636.0 558.6C639.3 559.2 642.7 559.7 646.0 560.0C649.3 560.2 652.7 560.3 656.0 560.1C659.3 559.9 662.7 559.4 666.0 559.0C669.3 558.6 672.7 558.0 676.0 557.6C679.3 557.2 682.7 556.9 686.0 556.8C689.3 556.6 692.7 556.7 696.0 556.8C699.3 556.9 702.7 557.1 706.0 557.2C709.3 557.3 712.7 557.3 716.0 557.3C719.3 557.3 722.7 557.2 726.0 557.1C729.3 557.1 732.7 557.0 736.0 557.1C739.3 557.2 744.3 557.6 746.0 557.7L746.0 561.7C744.3 561.5 739.3 560.8 736.0 560.6C732.7 560.3 729.3 560.3 726.0 560.3C722.7 560.4 719.3 560.6 716.0 560.7C712.7 560.9 709.3 561.1 706.0 561.2C702.7 561.3 699.3 561.3 696.0 561.3C692.7 561.4 689.3 561.4 686.0 561.6C682.7 561.7 679.3 561.9 676.0 562.2C672.7 562.5 669.3 562.9 666.0 563.1C662.7 563.3 659.3 563.6 656.0 563.6C652.7 563.6 649.3 563.5 646.0 563.2C642.7 562.9 639.3 562.4 636.0 562.0C632.7 561.5 629.3 561.0 626.0 560.6C622.7 560.2 619.3 559.9 616.0 559.7C612.7 559.4 609.3 559.4 606.0 559.2C602.7 559.1 599.3 559.0 596.0 558.8C592.7 558.7 589.3 558.5 586.0 558.3C582.7 558.1 579.3 557.9 576.0 557.9C572.7 557.9 569.3 557.9 566.0 558.2C562.7 558.4 559.3 558.8 556.0 559.2C552.7 559.5 549.3 560.1 546.0 560.4C542.7 560.7 539.3 561.0 536.0 561.1C532.7 561.2 529.3 561.0 526.0 560.9C522.7 560.8 519.3 560.5 516.0 560.2C512.7 560.0 509.3 559.8 506.0 559.6C502.7 559.4 499.3 559.4 496.0 559.2C492.7 559.0 489.3 558.8 486.0 558.5C482.7 558.3 479.3 557.8 476.0 557.4C472.7 557.0 467.7 556.3 466.0 556.1Z" fill="#b58d62" opacity=".45"/><path d="M466.0 561.3C467.7 561.1 472.7 560.5 476.0 560.1C479.3 559.7 482.7 559.2 486.0 558.9C489.3 558.6 492.7 558.4 496.0 558.3C499.3 558.2 502.7 558.2 506.0 558.3C509.3 558.3 512.7 558.3 516.0 558.4C519.3 558.4 522.7 558.3 526.0 558.4C529.3 558.4 532.7 558.4 536.0 558.6C539.3 558.8 542.7 559.1 546.0 559.5C549.3 559.9 552.7 560.6 556.0 561.1C559.3 561.7 562.7 562.4 566.0 562.8C569.3 563.3 572.7 563.7 576.0 563.9C579.3 564.1 582.7 564.1 586.0 564.0C589.3 564.0 592.7 563.8 596.0 563.7C599.3 563.6 602.7 563.5 606.0 563.4C609.3 563.3 612.7 563.3 616.0 563.2C619.3 563.1 622.7 563.0 626.0 562.8C629.3 562.5 632.7 562.1 636.0 561.8C639.3 561.5 642.7 561.0 646.0 560.7C649.3 560.4 652.7 560.2 656.0 560.2C659.3 560.2 662.7 560.4 666.0 560.7C669.3 560.9 672.7 561.5 676.0 561.9C679.3 562.3 682.7 562.8 686.0 563.2C689.3 563.6 692.7 563.9 696.0 564.1C699.3 564.4 702.7 564.6 706.0 564.9C709.3 565.1 712.7 565.4 716.0 565.7C719.3 566.0 722.7 566.4 726.0 566.7C729.3 567.0 732.7 567.3 736.0 567.4C739.3 567.4 744.3 567.2 746.0 567.1L746.0 574.7C744.3 574.6 739.3 574.8 736.0 574.5C732.7 574.3 729.3 573.7 726.0 573.3C722.7 572.8 719.3 572.2 716.0 571.8C712.7 571.4 709.3 571.1 706.0 570.9C702.7 570.7 699.3 570.7 696.0 570.5C692.7 570.4 689.3 570.4 686.0 570.2C682.7 570.0 679.3 569.7 676.0 569.4C672.7 569.0 669.3 568.6 666.0 568.2C662.7 567.9 659.3 567.6 656.0 567.4C652.7 567.3 649.3 567.3 646.0 567.4C642.7 567.5 639.3 567.7 636.0 568.0C632.7 568.2 629.3 568.5 626.0 568.8C622.7 569.0 619.3 569.3 616.0 569.5C612.7 569.8 609.3 570.0 606.0 570.3C602.7 570.5 599.3 570.9 596.0 571.1C592.7 571.3 589.3 571.6 586.0 571.6C582.7 571.7 579.3 571.6 576.0 571.2C572.7 570.9 569.3 570.3 566.0 569.6C562.7 569.0 559.3 568.0 556.0 567.4C552.7 566.7 549.3 565.9 546.0 565.5C542.7 565.1 539.3 564.9 536.0 564.8C532.7 564.8 529.3 565.0 526.0 565.1C522.7 565.3 519.3 565.6 516.0 565.7C512.7 565.8 509.3 565.9 506.0 565.9C502.7 565.9 499.3 565.7 496.0 565.7C492.7 565.7 489.3 565.7 486.0 565.8C482.7 565.9 479.3 566.1 476.0 566.4C472.7 566.7 467.7 567.2 466.0 567.3Z" fill="#dbc09a" opacity=".85"/><path d="M466.0 567.3C467.7 567.2 472.7 566.7 476.0 566.4C479.3 566.1 482.7 565.9 486.0 565.8C489.3 565.7 492.7 565.7 496.0 565.7C499.3 565.7 502.7 565.9 506.0 565.9C509.3 565.9 512.7 565.8 516.0 565.7C519.3 565.6 522.7 565.3 526.0 565.1C529.3 565.0 532.7 564.8 536.0 564.8C539.3 564.9 542.7 565.1 546.0 565.5C549.3 565.9 552.7 566.7 556.0 567.4C559.3 568.0 562.7 569.0 566.0 569.6C569.3 570.3 572.7 570.9 576.0 571.2C579.3 571.6 582.7 571.7 586.0 571.6C589.3 571.6 592.7 571.3 596.0 571.1C599.3 570.9 602.7 570.5 606.0 570.3C609.3 570.0 612.7 569.8 616.0 569.5C619.3 569.3 622.7 569.0 626.0 568.8C629.3 568.5 632.7 568.2 636.0 568.0C639.3 567.7 642.7 567.5 646.0 567.4C649.3 567.3 652.7 567.3 656.0 567.4C659.3 567.6 662.7 567.9 666.0 568.2C669.3 568.6 672.7 569.0 676.0 569.4C679.3 569.7 682.7 570.0 686.0 570.2C689.3 570.4 692.7 570.4 696.0 570.5C699.3 570.7 702.7 570.7 706.0 570.9C709.3 571.1 712.7 571.4 716.0 571.8C719.3 572.2 722.7 572.8 726.0 573.3C729.3 573.7 732.7 574.3 736.0 574.5C739.3 574.8 744.3 574.6 746.0 574.7L746.0 577.9C744.3 578.0 739.3 578.2 736.0 578.2C732.7 578.1 729.3 577.8 726.0 577.5C722.7 577.2 719.3 576.8 716.0 576.5C712.7 576.2 709.3 575.9 706.0 575.7C702.7 575.4 699.3 575.2 696.0 574.9C692.7 574.7 689.3 574.4 686.0 574.0C682.7 573.6 679.3 573.1 676.0 572.7C672.7 572.3 669.3 571.7 666.0 571.5C662.7 571.2 659.3 571.0 656.0 571.0C652.7 571.0 649.3 571.2 646.0 571.5C642.7 571.8 639.3 572.3 636.0 572.6C632.7 572.9 629.3 573.3 626.0 573.6C622.7 573.8 619.3 573.9 616.0 574.0C612.7 574.1 609.3 574.1 606.0 574.2C602.7 574.3 599.3 574.4 596.0 574.5C592.7 574.6 589.3 574.8 586.0 574.8C582.7 574.9 579.3 574.9 576.0 574.7C572.7 574.5 569.3 574.1 566.0 573.6C562.7 573.2 559.3 572.5 556.0 571.9C552.7 571.4 549.3 570.7 546.0 570.3C542.7 569.9 539.3 569.6 536.0 569.4C532.7 569.2 529.3 569.2 526.0 569.2C522.7 569.1 519.3 569.2 516.0 569.2C512.7 569.1 509.3 569.1 506.0 569.1C502.7 569.0 499.3 569.0 496.0 569.1C492.7 569.2 489.3 569.4 486.0 569.7C482.7 570.0 479.3 570.5 476.0 570.9C472.7 571.3 467.7 571.9 466.0 572.1Z" fill="#b58d62" opacity=".45"/></g><rect x="466" y="292" width="280" height="280" filter="url(#grain)" opacity=".12"/></g><g clip-path="url(#cm)"><rect x="756" y="290" width="280" height="280" fill="url(#gm)"/><rect x="756" y="290" width="280" height="280" filter="url(#grain)" opacity=".05"/></g><g font-family="Liberation Sans, sans-serif" font-weight="bold" font-size="27.500" fill="#dedede"><text x="287.500" y="268.500" textLength="67" lengthAdjust="spacingAndGlyphs">Birch</text><text x="578" y="268.500" textLength="51" lengthAdjust="spacingAndGlyphs">Ash</text><text x="854" y="268.500" textLength="76" lengthAdjust="spacingAndGlyphs">Maple</text></g><g font-family="Liberation Sans, sans-serif" fill="#141210" stroke="#141210" stroke-width=".35"><text x="793.500" y="363.600" font-size="40" textLength="212.500" lengthAdjust="spacingAndGlyphs">More Dense</text><text x="782.500" y="396.600" font-size="17.500" textLength="229" lengthAdjust="spacingAndGlyphs">Absorb moisture/ Get heavier</text><text x="784.500" y="437.500" font-size="40" textLength="230.500" lengthAdjust="spacingAndGlyphs">Less Flexible</text><text x="816.500" y="483" font-size="40" textLength="166" lengthAdjust="spacingAndGlyphs">More pop</text></g><path d="M849.500 384.500v11l2.500-2.300 1.800 4 1.500-.7-1.800-3.900h3.300z" fill="#111" stroke="#e8d8c8" stroke-width=".5"/><!--LOGO--><g id="logo" font-family="Liberation Sans, sans-serif">
<defs>
<path id="lgSw" d="M901 555L923 548L957 543L958 551L930 557.500L904 563Z"/>
<path id="lgW1" d="M972 509C976 506 984 506 987.500 509C992.500 515 994 523.500 994 531C986 527 975 519 972 509Z"/>
<path id="lgW2" d="M1001.500 508C1004 506 1007.500 507 1009 510C1011.500 515 1010.500 524 1000 532C998.500 524 999 514 1001.500 508Z"/>
<path id="lgAb" d="M980 549C982 557 978 565 967 569.500C958 573 949 571 943 573C938 576 935 581 931.500 585.500C932.500 579 934 573 937 567C940 559 946 553 955 550C963 547 972 547 980 549Z"/>
<clipPath id="lgAbC"><path d="M980 549C982 557 978 565 967 569.500C958 573 949 571 943 573C938 576 935 581 931.500 585.500C932.500 579 934 573 937 567C940 559 946 553 955 550C963 547 972 547 980 549Z"/></clipPath>
</defs>
<g fill="#fff" stroke="#fff" stroke-width="8.600" stroke-linejoin="round">
<path d="M901 555L923 548L957 543L958 551L930 557.500L904 563Z"/><path d="M972 509C976 506 984 506 987.500 509C992.500 515 994 523.500 994 531C986 527 975 519 972 509Z"/><path d="M1001.500 508C1004 506 1007.500 507 1009 510C1011.500 515 1010.500 524 1000 532C998.500 524 999 514 1001.500 508Z"/><path d="M980 549C982 557 978 565 967 569.500C958 573 949 571 943 573C938 576 935 581 931.500 585.500C932.500 579 934 573 937 567C940 559 946 553 955 550C963 547 972 547 980 549Z"/>
<text x="922" y="548.500" font-size="26" font-weight="bold" font-style="italic" textLength="94" lengthAdjust="spacingAndGlyphs" transform="rotate(-3 921 548)">Stinger</text>
<text x="992.500" y="558" font-size="12.500" font-weight="bold" font-style="italic" textLength="46" lengthAdjust="spacingAndGlyphs" stroke-width="5" stroke="#cfcfcf">Bat Co.</text>
</g>
<g fill="#1b1c12" stroke="#1b1c12" stroke-width="4.600" stroke-linejoin="round">
<path d="M901 555L923 548L957 543L958 551L930 557.500L904 563Z"/><path d="M972 509C976 506 984 506 987.500 509C992.500 515 994 523.500 994 531C986 527 975 519 972 509Z" fill="#2a2e1c"/><path d="M1001.500 508C1004 506 1007.500 507 1009 510C1011.500 515 1010.500 524 1000 532C998.500 524 999 514 1001.500 508Z" fill="#2a2e1c"/><path d="M980 549C982 557 978 565 967 569.500C958 573 949 571 943 573C938 576 935 581 931.500 585.500C932.500 579 934 573 937 567C940 559 946 553 955 550C963 547 972 547 980 549Z"/>
<text x="922" y="548.500" font-size="26" font-weight="bold" font-style="italic" textLength="94" lengthAdjust="spacingAndGlyphs" transform="rotate(-3 921 548)">Stinger</text>
<text x="992.500" y="558" font-size="12.500" font-weight="bold" font-style="italic" textLength="46" lengthAdjust="spacingAndGlyphs" stroke-width="2.800">Bat Co.</text>
</g>
<path d="M976 511C982 515 988 522 992 528M1004.500 510C1005 515 1004 522 1001.500 529" stroke="#5d6339" stroke-width="1.200" fill="none"/>
<g clip-path="url(#lgAbC)"><path d="M980 549C982 557 978 565 967 569.500C958 573 949 571 943 573C938 576 935 581 931.500 585.500C932.500 579 934 573 937 567C940 559 946 553 955 550C963 547 972 547 980 549Z" fill="#dcc636"/>
<g stroke="#17170f" stroke-width="4.600" fill="none"><path d="M941 558C939 564 941 570 944 576"/><path d="M951.500 550C949 557 951 566 956 574"/><path d="M962 546C960 553 962 562 968 570"/><path d="M972.500 544C971.500 551 973.500 558 979.500 565"/><path d="M983 543C982 549 984 555 988 560"/></g>
<path d="M931 586L936 572L940 574Z" fill="#f2f2f2"/></g>
<path d="M904 557L924 551L956 545.500L956 547.500L928 553Z" fill="#d9c336"/>
<path d="M980 531C984 528 989 529 991 533C987 532 983 533 981 536Z" fill="#d9c336"/>
<text x="922" y="548.500" font-size="26" font-weight="bold" font-style="italic" textLength="94" lengthAdjust="spacingAndGlyphs" transform="rotate(-3 921 548)" fill="#d6c035" stroke="#1b1c12" stroke-width="0.600">Stinger</text>
<text x="992.500" y="558" font-size="12.500" font-weight="bold" font-style="italic" textLength="46" lengthAdjust="spacingAndGlyphs" fill="#f4f4f4">Bat Co.</text>
</g><!--/LOGO--></svg><!--/IMG-->
<div class="abs" style="left:1151px;top:0;width:1px;height:654px;background:#252525"></div><div class="abs" style="left:0;top:33px;width:1px;height:621px;background:#1e1e1e"></div><!--SC--><div class="abs" style="left:360px;top:614.500px;width:432px;height:33px;background:#252527;">
   <div class="abs" style="left:8px;top:12px;width:1.500px;height:9px;background:#e0e0e0"></div><div class="abs" style="left:11.500px;top:12px;width:1.500px;height:9px;background:#e0e0e0"></div>
   <div class="abs" id="sctxt" style="left:21px;top:10px;font-size:10px;line-height:13px;color:#efefef;white-space:nowrap;letter-spacing:0.06px">Screencastify - Screen Video Recorder is sharing your screen.</div>
   <div class="abs" style="left:310px;top:4.500px;width:84px;height:24.500px;background:#323234;border-radius:2px;color:#9a9a9c;font-size:10px;line-height:24.500px;text-align:center;letter-spacing:0.1px">Stop sharing</div>
   <div class="abs" id="schide" style="left:402px;top:10px;font-size:10px;line-height:13px;color:#8fb1ee;white-space:nowrap;letter-spacing:0.1px">Hide</div>
  </div><!--/SC-->
  <div id="toolbar" class="abs">
   <svg class="abs" style="left:10.500px;top:8px" width="14" height="14" viewBox="0 0 14 14"><path d="M12.500 7h-10M6.500 2.500l-4.500 4.500 4.500 4.500" fill="none" stroke="#8a8a8a" stroke-width="1.400"/></svg>
   <svg class="abs" style="left:36.500px;top:8px" width="14" height="14" viewBox="0 0 14 14"><path d="M1.500 7h10M7.500 2.500l4.500 4.500-4.500 4.500" fill="none" stroke="#7a7a7a" stroke-width="1.400"/></svg>
   <svg class="abs" style="left:62px;top:8px" width="14" height="14" viewBox="0 0 14 14"><path d="M11.300 5a4.700 4.700 0 1 0 .4 3.200" fill="none" stroke="#8a8a8a" stroke-width="1.400"/><path d="M12.300 1.500v4h-4z" fill="#8a8a8a"/></svg>
   <div id="url" class="abs"></div>
   <svg class="abs" style="left:96.500px;top:10.500px" width="8" height="9.600" viewBox="0 0 10 12"><rect x="1" y="5" width="8" height="6" rx="1" fill="#d8d8d8"/><path d="M3 5v-1.500a2 2 0 0 1 4 0v1.500" fill="none" stroke="#d8d8d8" stroke-width="1.300"/></svg>
   <div class="abs" style="left:113.5px;top:8px;font-size:12px;letter-spacing:-0.043px;line-height:14px;color:#9a9a9a;white-space:nowrap"><span style="color:#f2f2f2;letter-spacing:0.11px">cdn.shopify.com</span>/s/files/1/0176/3767/1012/articles/birch_ash_maple_copy_720x.jpg?v=1560975650</div>
   <svg class="abs" style="left:916px;top:8px" width="13" height="15" viewBox="0 0 13 15"><path d="M4 5.500h-1.500v7.500h8v-7.500h-1.500M6.500 9.500v-8M4 3.500l2.500-2.500 2.500 2.500" fill="none" stroke="#d0d0d0" stroke-width="1.300"/></svg>
   <svg class="abs" style="left:941px;top:8px" width="15" height="15" viewBox="0 0 15 15"><path d="M7.500 1.800l1.750 3.700 4 .5-2.950 2.750.75 4-3.550-1.950-3.550 1.950.75-4-2.950-2.750 4-.5z" fill="none" stroke="#d0d0d0" stroke-width="1.300" stroke-linejoin="round"/></svg>
   <!-- extensions -->
   <svg class="abs" style="left:972px;top:8px" width="16" height="16" viewBox="0 0 16 16"><path d="M2 4h6l4 3.500-4 3.500h-6z" fill="#e9e9e9"/><path d="M2 4h4v7h-4z" fill="#d63030"/><circle cx="11" cy="10.500" r="3.300" fill="#e02020"/></svg>
   <svg class="abs" style="left:998px;top:8px" width="16" height="16" viewBox="0 0 16 16"><rect x="1.500" y="2" width="13" height="10" rx="1" fill="#e4e8ee"/><rect x="2.500" y="3" width="11" height="4" fill="#c4d4ea"/><path d="M11 9v5M8.500 11.500h5" stroke="#2a63c9" stroke-width="1.800"/></svg>
   <svg class="abs" style="left:1024px;top:7px" width="16" height="18" viewBox="0 0 16 18"><path d="M3 2h10v4l-3 2v8h-3.500v-6l-3.500-3z" fill="#f0b323"/><path d="M5 3h6v2h-6z" fill="#f7d36a"/></svg>
   <svg class="abs" style="left:1049px;top:8px" width="16" height="16" viewBox="0 0 16 16"><path d="M6 2.500a1.600 1.600 0 0 1 3.200 0v1h3v3.200h1a1.600 1.600 0 0 1 0 3.200h-1v3.600h-3.500v-1a1.500 1.500 0 0 0-3 0v1h-3.200v-3.500h1a1.500 1.500 0 0 0 0-3h-1v-3.500h3.500z" fill="#8c8c8c"/></svg>
   <svg class="abs" style="left:1076px;top:9px" width="14" height="14" viewBox="0 0 14 14"><rect x="1.500" y="1.500" width="11" height="11" rx="1" fill="none" stroke="#b0b0b0" stroke-width="1.400"/><rect x="7.500" y="2" width="4.500" height="10" fill="#b0b0b0"/></svg>
   <div class="abs" style="left:1099px;top:7px;width:18px;height:18px;border-radius:50%;background:radial-gradient(circle at 70% 35%,#7a2a3a 0 30%,transparent 31%),linear-gradient(180deg,#3a2028 0 50%,#5a1f8a 50% 100%);overflow:hidden"><div class="abs" style="left:10px;top:4px;width:6px;height:2px;background:#f0d8d8"></div></div>
   <svg class="abs" style="left:1132px;top:8px" width="4" height="16" viewBox="0 0 4 16"><circle cx="2" cy="3" r="1.300" fill="#a8a8a8"/><circle cx="2" cy="8" r="1.300" fill="#a8a8a8"/><circle cx="2" cy="13" r="1.300" fill="#a8a8a8"/></svg>
   <!-- bookmarks -->
   <svg class="abs" style="left:11.300px;top:35.200px" width="14.300" height="10.600" viewBox="0 0 13 10" preserveAspectRatio="none"><rect x="0" y="0" width="13" height="10" rx="2.500" fill="#d9151c"/><path d="M5 2.800v4.400l3.800-2.200z" fill="#fff"/></svg>
   <div class="abs" style="left:31px;top:34px;font-size:9.900px;line-height:13px;color:#b4b4b4;white-space:nowrap">(1) surgical tape u...</div>
  </div>
 </div>
 <div class="abs" style="left:216px;top:716.500px;width:720px;height:4px;background:#0e7d68"></div>
 <div id="dock" class="abs"><!--DOCK--><svg class="abs" style="left:5.75px;top:4.500px" width="27.100" height="28.260" viewBox="0 0 26 26" preserveAspectRatio="none" overflow="visible"><defs><clipPath id="fc"><rect x="1" y="1.500" width="24" height="23" rx="5"/></clipPath></defs><g clip-path="url(#fc)"><rect x="0" y="0" width="26" height="26" fill="#2a9df4"/><path d="M14 0h12v26h-14c1-4 .5-7 0-10h3.500c-.5-6-1-10-1.500-16z" fill="#eef1f6"/><path d="M7 15c3 3.500 9 3.500 12 0" stroke="#1d3557" stroke-width="1.200" fill="none"/><path d="M8.500 7.500v3M17.500 7.500v3" stroke="#1d3557" stroke-width="1.300"/></g></svg><div class="dot" style="left:17.6px"></div><svg class="abs" style="left:38.25px;top:4.500px" width="27.100" height="28.260" viewBox="0 0 26 26" preserveAspectRatio="none" overflow="visible"><rect x="1" y="1.500" width="24" height="23" rx="5.500" fill="#cfd6d8"/><rect x="5" y="5" width="4.300" height="4.300" rx="1" fill="#7cd64b"/><rect x="11" y="5" width="4.300" height="4.300" rx="1" fill="#f0c030"/><rect x="17" y="5" width="4.300" height="4.300" rx="1" fill="#f08a2a"/><rect x="5" y="11" width="4.300" height="4.300" rx="1" fill="#c8202a"/><rect x="11" y="11" width="4.300" height="4.300" rx="1" fill="#8c96a0"/><rect x="17" y="11" width="4.300" height="4.300" rx="1" fill="#e0405a"/><rect x="5" y="17" width="4.300" height="4.300" rx="1" fill="#9a3ad0"/><rect x="11" y="17" width="4.300" height="4.300" rx="1" fill="#2a8ff0"/><rect x="17" y="17" width="4.300" height="4.300" rx="1" fill="#5fd0a0"/></svg><svg class="abs" style="left:71.25px;top:4.500px" width="27.100" height="28.260" viewBox="0 0 26 26" preserveAspectRatio="none" overflow="visible"><rect x="1" y="1.500" width="24" height="23" rx="5.500" fill="#f4f5f7"/><circle cx="13" cy="13" r="9.600" fill="#2a8ff0"/><circle cx="13" cy="13" r="8.300" fill="#3ea2f7"/><path d="M18.500 7.500l-4.300 6.700-2.400-2.400z" fill="#f24a3c"/><path d="M7.500 18.500l4.300-6.700 2.400 2.400z" fill="#f2f2f2"/></svg><svg class="abs" style="left:104.25px;top:4.500px" width="27.100" height="28.260" viewBox="0 0 26 26" preserveAspectRatio="none" overflow="visible"><defs><linearGradient id="gMsg" x1="0" y1="0" x2="0" y2="1"><stop offset="0" stop-color="#62ee72"/><stop offset="1" stop-color="#1fc638"/></linearGradient><linearGradient id="gMail" x1="0" y1="0" x2="0" y2="1"><stop offset="0" stop-color="#2a78e6"/><stop offset="1" stop-color="#2fc8f5"/></linearGradient><linearGradient id="gAS" x1="0" y1="0" x2="0" y2="1"><stop offset="0" stop-color="#25b8f8"/><stop offset="1" stop-color="#1a7cf0"/></linearGradient></defs><rect x="1" y="1.500" width="24" height="23" rx="5.500" fill="url(#gMsg)"/><ellipse cx="13" cy="12.300" rx="7.800" ry="6.300" fill="#f4fff4"/><path d="M8 16l-1.500 3.500 4.500-2z" fill="#f4fff4"/></svg><div class="dot" style="left:116.1px"></div><svg class="abs" style="left:137.05px;top:4.500px" width="27.100" height="28.260" viewBox="0 0 26 26" preserveAspectRatio="none" overflow="visible"><rect x="1" y="1.500" width="24" height="23" rx="5.500" fill="url(#gMail)"/><rect x="5" y="8" width="16" height="10.500" rx="1.500" fill="#f2f6fb"/><path d="M5.500 8.800l7.500 5.700 7.500-5.700" stroke="#a9bfd8" stroke-width="1" fill="none"/></svg><svg class="abs" style="left:169.65px;top:4.500px" width="27.100" height="28.260" viewBox="0 0 26 26" preserveAspectRatio="none" overflow="visible"><rect x="1" y="1.500" width="24" height="23" rx="5.500" fill="#f7f7f7"/><ellipse cx="13" cy="7.800" rx="2.700" ry="4.600" fill="#f6a623" opacity=".88" transform="rotate(0 13 13)"/><ellipse cx="13" cy="7.800" rx="2.700" ry="4.600" fill="#f3d033" opacity=".88" transform="rotate(45 13 13)"/><ellipse cx="13" cy="7.800" rx="2.700" ry="4.600" fill="#a6d53a" opacity=".88" transform="rotate(90 13 13)"/><ellipse cx="13" cy="7.800" rx="2.700" ry="4.600" fill="#4cc98f" opacity=".88" transform="rotate(135 13 13)"/><ellipse cx="13" cy="7.800" rx="2.700" ry="4.600" fill="#3aa0ef" opacity=".88" transform="rotate(180 13 13)"/><ellipse cx="13" cy="7.800" rx="2.700" ry="4.600" fill="#7a5fe0" opacity=".88" transform="rotate(225 13 13)"/><ellipse cx="13" cy="7.800" rx="2.700" ry="4.600" fill="#d154b8" opacity=".88" transform="rotate(270 13 13)"/><ellipse cx="13" cy="7.800" rx="2.700" ry="4.600" fill="#f0524a" opacity=".88" transform="rotate(315 13 13)"/></svg><svg class="abs" style="left:202.55px;top:4.500px" width="27.100" height="28.260" viewBox="0 0 26 26" preserveAspectRatio="none" overflow="visible"><rect x="1" y="1.500" width="24" height="23" rx="5.500" fill="url(#gMsg)"/><rect x="5" y="8.500" width="10.500" height="9" rx="2.200" fill="#f4fff4"/><path d="M16.300 12l4.500-3v8l-4.500-3z" fill="#f4fff4"/></svg><svg class="abs" style="left:235.15px;top:4.500px" width="27.100" height="28.260" viewBox="0 0 26 26" preserveAspectRatio="none" overflow="visible"><rect x="1" y="1.500" width="24" height="23" rx="5.500" fill="#f8f8f8"/><path d="M1 8.500v-1.500a5.500 5.500 0 0 1 5.500-5.500h13a5.500 5.500 0 0 1 5.500 5.500v1.500z" fill="#e8453c"/><text x="13" y="7.300" font-size="4.800" font-weight="bold" fill="#fff" text-anchor="middle" font-family="Liberation Sans, sans-serif">AUG</text><text x="13" y="21.500" font-size="13.500" fill="#3a3a3a" text-anchor="middle" font-family="Liberation Sans, sans-serif">14</text></svg><svg class="abs" style="left:268.25px;top:4.500px" width="27.100" height="28.260" viewBox="0 0 26 26" preserveAspectRatio="none" overflow="visible"><rect x="1" y="1.500" width="24" height="23" rx="5.500" fill="#b38a56"/><rect x="3.500" y="3" width="19.500" height="20" rx="3" fill="#a67c48"/><circle cx="13" cy="10.500" r="3.600" fill="#8d6838"/><path d="M6 20.500c1-5 13-5 14 0z" fill="#8d6838"/><circle cx="13" cy="13" r="8" fill="none" stroke="#8d6838" stroke-width="1"/></svg><svg class="abs" style="left:300.95px;top:4.500px" width="27.100" height="28.260" viewBox="0 0 26 26" preserveAspectRatio="none" overflow="visible"><rect x="1" y="1.500" width="24" height="23" rx="5.500" fill="#f8f8f8"/><circle cx="6.500" cy="7.500" r="1.800" fill="#2f8ff5"/><circle cx="6.500" cy="13" r="1.800" fill="#f0524a"/><circle cx="6.500" cy="18.500" r="1.800" fill="#f6a623"/><path d="M10 7.500h11M10 13h11M10 18.500h11" stroke="#c9c9c9" stroke-width="1.100"/></svg><svg class="abs" style="left:333.75px;top:4.500px" width="27.100" height="28.260" viewBox="0 0 26 26" preserveAspectRatio="none" overflow="visible"><rect x="1" y="1.500" width="24" height="23" rx="5.500" fill="#fbfbf6"/><path d="M1 9v-2a5.500 5.500 0 0 1 5.500-5.500h13a5.500 5.500 0 0 1 5.500 5.500v2z" fill="#f7cf3c"/><path d="M1 9h24" stroke="#d9c98a" stroke-width=".6"/></svg><svg class="abs" style="left:366.65px;top:4.500px" width="27.100" height="28.260" viewBox="0 0 26 26" preserveAspectRatio="none" overflow="visible"><rect x="1" y="1.500" width="24" height="23" rx="5.500" fill="#f4f6f9"/><rect x="9" y="4.500" width="13" height="17" rx="1.200" fill="#e8eef7"/><rect x="9" y="4.500" width="13" height="4.300" fill="#4a9ae8"/><rect x="9" y="8.800" width="13" height="4.200" fill="#2f7bd6"/><rect x="9" y="13" width="13" height="4.200" fill="#1f5fb8"/><rect x="9" y="17.200" width="13" height="4.300" fill="#17479a"/><rect x="3.500" y="8" width="10.500" height="10.500" rx="1.200" fill="#1c5bb5"/><text x="8.750" y="16.300" font-size="8" font-weight="bold" fill="#fff" text-anchor="middle" font-family="Liberation Sans, sans-serif">W</text></svg><div class="dot" style="left:378.5px"></div><svg class="abs" style="left:399.55px;top:4.500px" width="27.100" height="28.260" viewBox="0 0 26 26" preserveAspectRatio="none" overflow="visible"><rect x="1" y="1.500" width="24" height="23" rx="5.500" fill="#f8f8f6"/><path d="M5 9c0-2 1-3.500 2.700-4v1.500c-.7.300-1 .9-1 1.500h1v2.500h-2.700zM9.500 9c0-2 1-3.500 2.700-4v1.500c-.7.300-1 .9-1 1.500h1v2.500h-2.700z" fill="#555"/><path d="M20.500 4.500l2 1.600-9.500 13.500-3 1.400.6-3.300z" fill="#f0952a"/><path d="M10.600 17.700l-.6 3.300 3-1.400z" fill="#444"/></svg><svg class="abs" style="left:432.15px;top:4.500px" width="27.100" height="28.260" viewBox="0 0 26 26" preserveAspectRatio="none" overflow="visible"><rect x="1" y="1.500" width="24" height="23" rx="5.500" fill="url(#gAS)"/><path d="M13 6l5.500 10M13 6l-5.500 10M10 19l1-2M5.500 15.500h8M15.500 15.500h5M17.500 14.500l2 4" stroke="#fff" stroke-width="1.900" stroke-linecap="round" fill="none"/></svg><svg class="abs" style="left:464.95px;top:4.500px" width="27.100" height="28.260" viewBox="0 0 26 26" preserveAspectRatio="none" overflow="visible"><rect x="1" y="1.500" width="24" height="23" rx="5.500" fill="#8e8e93"/><rect x="1.800" y="2.300" width="22.400" height="21.400" rx="5" fill="#6e6e73"/><circle cx="13" cy="13" r="8.300" fill="#b9b9be"/><circle cx="13" cy="13" r="6.500" fill="#55555a"/><circle cx="13" cy="13" r="4.600" fill="none" stroke="#a5a5aa" stroke-width="1.300"/><circle cx="13" cy="13" r="1.600" fill="#a5a5aa"/><path d="M13 6.500v13M7.400 9.800l11.200 6.400M7.400 16.200l11.200-6.400" stroke="#8a8a8f" stroke-width=".8"/></svg><svg class="abs" style="left:497.55px;top:4.500px" width="27.100" height="28.260" viewBox="0 0 26 26" preserveAspectRatio="none" overflow="visible"><rect x="3" y="1.500" width="20" height="23" rx="4.500" fill="#d4d4d6"/><rect x="4" y="2.500" width="18" height="21" rx="3.800" fill="#9a9a9e"/><rect x="6" y="4.500" width="14" height="4.500" rx="1" fill="#3a3a3c"/><circle cx="8" cy="12.2" r="1.500" fill="#3c3c3e"/><circle cx="13" cy="12.2" r="1.500" fill="#3c3c3e"/><circle cx="18" cy="12.2" r="1.500" fill="#f39a2a"/><circle cx="8" cy="15.899999999999999" r="1.500" fill="#3c3c3e"/><circle cx="13" cy="15.899999999999999" r="1.500" fill="#3c3c3e"/><circle cx="18" cy="15.899999999999999" r="1.500" fill="#f39a2a"/><circle cx="8" cy="19.6" r="1.500" fill="#3c3c3e"/><circle cx="13" cy="19.6" r="1.500" fill="#3c3c3e"/><circle cx="18" cy="19.6" r="1.500" fill="#f39a2a"/></svg><svg class="abs" style="left:545.85px;top:4.500px" width="27.100" height="28.260" viewBox="0 0 26 26" preserveAspectRatio="none" overflow="visible"><rect x="2.500" y="5" width="20" height="18" rx="1.500" fill="#e9cf52"/><rect x="2" y="2.500" width="21" height="18" rx="1.500" fill="#f7e27a"/><path d="M2 2.500h21v3h-21z" fill="#f0d556"/><path d="M5 9h12M5 12h14M5 15h10" stroke="#c9b44a" stroke-width=".9"/></svg><div class="dot" style="left:557.7px"></div><svg class="abs" style="left:578.55px;top:4.500px" width="27.100" height="28.260" viewBox="0 0 26 26" preserveAspectRatio="none" overflow="visible"><rect x="1" y="1.500" width="24" height="23" rx="5.500" fill="#f3f0fa"/><path d="M13 3.500l2.900 6 6.600.8-4.900 4.500 1.300 6.500-5.900-3.300-5.900 3.300 1.300-6.500-4.900-4.500 6.600-.8z" fill="#5a2fb8"/><path d="M13 8l1.500 3.200 3.500.400-2.600 2.400.7 3.400-3.100-1.700-3.100 1.700.7-3.400-2.600-2.400 3.500-.400z" fill="#2a1a60"/><rect x="10.500" y="11.500" width="4" height="3" rx=".6" fill="#e8e0ff"/></svg><div class="dot" style="left:590.4px"></div><svg class="abs" style="left:611.05px;top:4.500px" width="27.100" height="28.260" viewBox="0 0 26 26" preserveAspectRatio="none" overflow="visible"><rect x="1" y="1.500" width="24" height="23" rx="5.500" fill="url(#gAS)"/><path d="M8.500 9l9 8-4.500 4v-16l4.500 4-9 8" stroke="#fff" stroke-width="1.500" fill="none" stroke-linejoin="round"/></svg><div class="dot" style="left:622.9px"></div><svg class="abs" style="left:643.85px;top:4.500px" width="27.100" height="28.260" viewBox="0 0 26 26" preserveAspectRatio="none" overflow="visible"><rect x="1" y="1.500" width="24" height="23" rx="5.500" fill="#f4f4f4"/><circle cx="13" cy="13" r="9.500" fill="#e33b2e"/><path d="M13 13L4.770 8.250A9.500 9.500 0 0 0 13 22.500z" fill="#2da94f"/><path d="M13 13v9.500A9.500 9.500 0 0 0 21.230 8.250z" fill="#fcc31e"/><path d="M13 13L4.770 8.250A9.500 9.500 0 0 1 21.230 8.250z" fill="#e33b2e"/><circle cx="13" cy="13" r="4.400" fill="#f4f4f4"/><circle cx="13" cy="13" r="3.500" fill="#3e82f1"/></svg><div class="dot" style="left:655.7px"></div><svg class="abs" style="left:676.75px;top:4.500px" width="27.100" height="28.260" viewBox="0 0 26 26" preserveAspectRatio="none" overflow="visible"><rect x="1" y="1.500" width="24" height="23" rx="5.500" fill="#1e1e22"/><circle cx="13" cy="12.500" r="8.300" fill="#c9ccd2"/><circle cx="13" cy="12.500" r="6.300" fill="#1f9fe8"/><circle cx="13" cy="12.500" r="3.800" fill="#25313d"/><path d="M15.500 16l5 5.500" stroke="#c9ccd2" stroke-width="3" stroke-linecap="round"/><path d="M9.500 9.500a4.500 4.500 0 0 1 5-1" stroke="#9fe0ff" stroke-width="1.200" fill="none"/></svg><div class="dot" style="left:688.6px"></div><svg class="abs" style="left:724.25px;top:4.500px" width="27.100" height="28.260" viewBox="0 0 26 26" preserveAspectRatio="none" overflow="visible"><rect x="0" y="4" width="27" height="19" fill="#2b2e33"/><rect x="0" y="4" width="8" height="19" fill="#3a3d42"/><rect x="16" y="9" width="11" height="3" fill="#2d63c8"/><rect x="10" y="14" width="15" height="1.500" fill="#4a4d55"/><rect x="17" y="17" width="10" height="10" rx="2.500" fill="#3bd654"/><ellipse cx="22" cy="21.700" rx="3" ry="2.400" fill="#dfffe0"/></svg><svg class="abs" style="left:756.75px;top:4.500px" width="27.100" height="28.260" viewBox="0 0 26 26" preserveAspectRatio="none" overflow="visible"><rect x="0" y="5" width="28" height="17" fill="#3a3a3c"/><rect x="14" y="5" width="14" height="8" fill="#050505"/><rect x="0" y="5" width="14" height="8" fill="#2e2e30"/><rect x="18" y="17" width="10" height="10" rx="2.500" fill="#f3f0fa"/><path d="M23 18.500l1.100 2.300 2.500.3-1.900 1.700.5 2.500-2.200-1.300-2.200 1.300.5-2.500-1.900-1.700 2.500-.3z" fill="#4a25a8"/></svg><svg class="abs" style="left:789.75px;top:4.500px" width="27.100" height="28.260" viewBox="0 0 26 26" preserveAspectRatio="none" overflow="visible"><rect x="0" y="6" width="28" height="15" fill="#3f63a3"/><rect x="0" y="6" width="6" height="15" fill="#243558"/><rect x="17" y="7" width="8" height="5" fill="#d9d0c4"/><rect x="6" y="13" width="10" height="6" fill="#2e6fd0"/><rect x="17" y="12" width="11" height="6" fill="#7a6a5a"/><circle cx="23" cy="22" r="5" fill="#1e1e22"/><circle cx="23" cy="22" r="3.800" fill="#c9ccd2"/><circle cx="23" cy="22" r="2.700" fill="#1f9fe8"/></svg><svg class="abs" style="left:820.3px;top:1.500px" width="33" height="33" viewBox="0 0 26 26" overflow="visible"><path d="M5 6.500l2 17.500c.2 1 1 1.500 2 1.500h8c1 0 1.800-.5 2-1.500l2-17.500z" fill="#8f9699" opacity=".9"/><path d="M5 6.500l2 17.500c.2 1 1 1.500 2 1.500h2l-1.500-19z" fill="#7a8083"/><ellipse cx="13" cy="6.500" rx="8.200" ry="2.600" fill="#aab0b3"/><ellipse cx="13" cy="6.500" rx="6.800" ry="1.800" fill="#6d7376"/><path d="M8 5.500l2-3 2.500 1.500 2-2 3 3.500-3 1.500-3-1z" fill="#d8dbdc"/><path d="M9.500 10v13M13 10v13.500M16.500 10v13" stroke="#70777a" stroke-width=".8"/></svg><div class="abs" style="left:534px;top:8px;width:1px;height:25px;background:#3fa58e"></div><div class="abs" style="left:713.500px;top:8px;width:1px;height:25px;background:#3fa58e"></div><!--/DOCK--></div>
</div>
</body></html>
